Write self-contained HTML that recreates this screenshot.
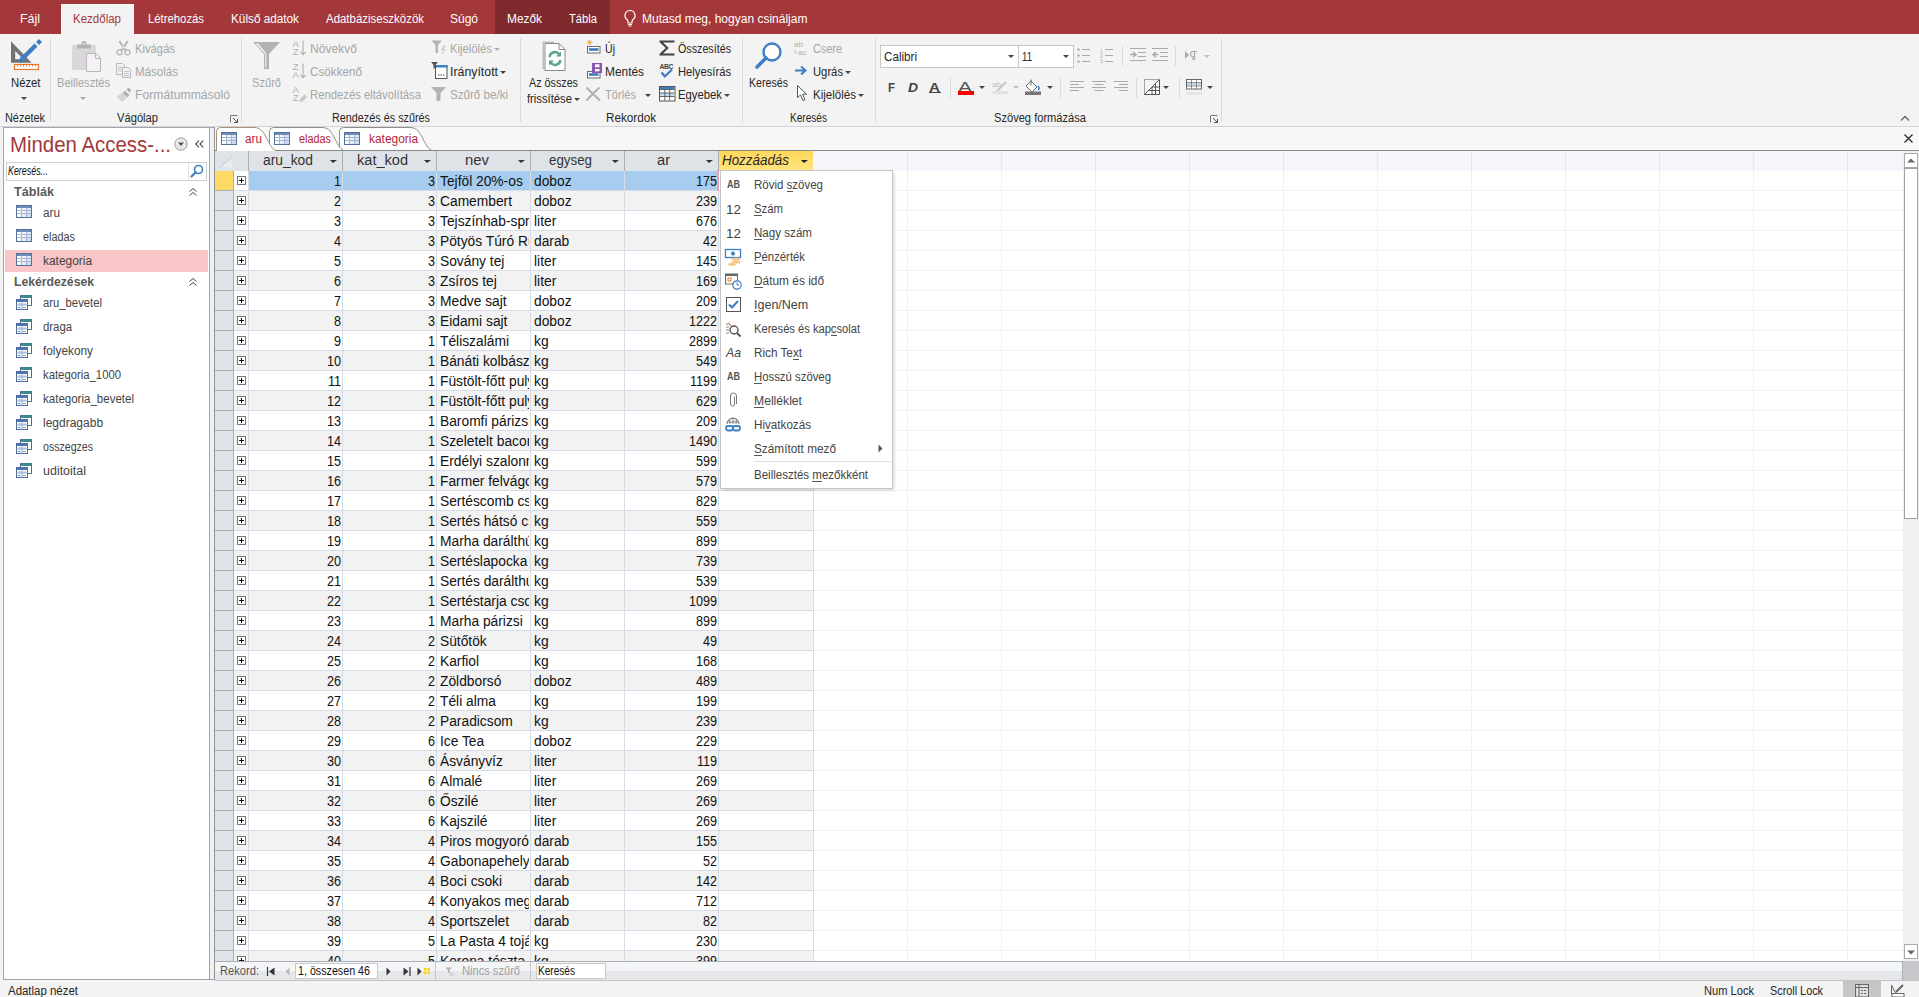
<!DOCTYPE html><html><head><meta charset="utf-8"><style>
html,body{margin:0;padding:0;}
body{width:1919px;height:997px;position:relative;overflow:hidden;background:#f3f3f3;font-family:"Liberation Sans",sans-serif;}
.t{position:absolute;white-space:pre;line-height:1;transform-origin:0 0;}
.r{position:absolute;}
.s{position:absolute;overflow:visible;}
</style></head><body>
<div class="r" style="left:0px;top:0px;width:1919px;height:34px;background:#a4373a;"></div>
<div class="r" style="left:495px;top:0px;width:115px;height:34px;background:#7f2a2d;"></div>
<div class="r" style="left:61px;top:4px;width:73px;height:31px;background:#f3f3f3;box-shadow:inset 1px 1px 0 #fafafa, inset -1px 0 0 #fafafa;"></div>
<div class="t" style="left:20.00px;top:12.84px;font-size:12px;color:#ffffff;transform:scaleX(1.0344);">Fájl</div>
<div class="t" style="left:73.00px;top:12.84px;font-size:12px;color:#a4373a;transform:scaleX(0.9593);">Kezdőlap</div>
<div class="t" style="left:148.00px;top:12.84px;font-size:12px;color:#ffffff;transform:scaleX(0.9432);">Létrehozás</div>
<div class="t" style="left:231.00px;top:12.84px;font-size:12px;color:#ffffff;transform:scaleX(0.9801);">Külső adatok</div>
<div class="t" style="left:326.00px;top:12.84px;font-size:12px;color:#ffffff;transform:scaleX(0.9541);">Adatbáziseszközök</div>
<div class="t" style="left:450.00px;top:12.84px;font-size:12px;color:#ffffff;">Súgó</div>
<div class="t" style="left:507.00px;top:12.84px;font-size:12px;color:#ffffff;transform:scaleX(0.9903);">Mezők</div>
<div class="t" style="left:569.00px;top:12.84px;font-size:12px;color:#ffffff;transform:scaleX(0.9328);">Tábla</div>
<svg class="s" style="left:623px;top:9px;" width="14" height="18" viewBox="0 0 14 18"><path d="M7 1.5a5 5 0 0 0-3 9c.7.6 1 1.3 1 2.2V14h4v-1.3c0-.9.3-1.6 1-2.2a5 5 0 0 0-3-9z" fill="none" stroke="#fff" stroke-width="1.2"/><path d="M5 15.5h4M5.5 17h3" stroke="#fff" stroke-width="1.1"/></svg>
<div class="t" style="left:642.00px;top:12.84px;font-size:12px;color:#ffffff;">Mutasd meg, hogyan csináljam</div>
<div class="r" style="left:0px;top:34px;width:1919px;height:92px;background:#f3f3f3;"></div>
<div class="r" style="left:0px;top:126px;width:1919px;height:1px;background:#d4d4d4;"></div>
<div class="r" style="left:50px;top:38px;width:1px;height:84px;background:#dadada;"></div>
<div class="r" style="left:241px;top:38px;width:1px;height:84px;background:#dadada;"></div>
<div class="r" style="left:520px;top:38px;width:1px;height:84px;background:#dadada;"></div>
<div class="r" style="left:742px;top:38px;width:1px;height:84px;background:#dadada;"></div>
<div class="r" style="left:875px;top:38px;width:1px;height:84px;background:#dadada;"></div>
<div class="r" style="left:1221px;top:38px;width:1px;height:84px;background:#dadada;"></div>
<div class="t" style="left:5.00px;top:111.84px;font-size:12px;color:#262626;transform:scaleX(0.9087);">Nézetek</div>
<div class="t" style="left:117.00px;top:111.84px;font-size:12px;color:#262626;transform:scaleX(0.9310);">Vágólap</div>
<div class="t" style="left:332.00px;top:111.84px;font-size:12px;color:#262626;transform:scaleX(0.9014);">Rendezés és szűrés</div>
<div class="t" style="left:606.00px;top:111.84px;font-size:12px;color:#262626;transform:scaleX(0.9736);">Rekordok</div>
<div class="t" style="left:790.00px;top:111.84px;font-size:12px;color:#262626;transform:scaleX(0.8405);">Keresés</div>
<div class="t" style="left:994.00px;top:111.84px;font-size:12px;color:#262626;transform:scaleX(0.9257);">Szöveg formázása</div>
<svg class="s" style="left:230px;top:115px;" width="8" height="8" viewBox="0 0 8 8"><path d="M0.5 7.5V0.5H7.5" fill="none" stroke="#777" stroke-width="1"/><path d="M3 3L7.5 7.5M4 7.5H7.5V4" fill="none" stroke="#555" stroke-width="1"/></svg>
<svg class="s" style="left:1210px;top:115px;" width="8" height="8" viewBox="0 0 8 8"><path d="M0.5 7.5V0.5H7.5" fill="none" stroke="#777" stroke-width="1"/><path d="M3 3L7.5 7.5M4 7.5H7.5V4" fill="none" stroke="#555" stroke-width="1"/></svg>
<svg class="s" style="left:1900px;top:115px;" width="10" height="6" viewBox="0 0 10 6"><path d="M1 5.5L5 1.5L9 5.5" fill="none" stroke="#666" stroke-width="1.4"/></svg>
<svg class="s" style="left:0px;top:36px;" width="48" height="36" viewBox="0 0 48 36"><path d="M11 5.3V26.7H31.6Z M15.2 15V23.2H23.4Z" fill="#737373" fill-rule="evenodd"/><rect x="14.5" y="28.5" width="24" height="5" fill="#fff" stroke="#e8772e" stroke-width="1.2"/><path d="M17.5 28.5v2M20.5 28.5v2M23.5 28.5v2M26.5 28.5v2M29.5 28.5v2M32.5 28.5v2M35.5 28.5v2" stroke="#e8772e" stroke-width="1"/><path d="M22.5 22.5L36 9" stroke="#3e7cc4" stroke-width="4.2"/><path d="M37.6 7.4L40.5 4.5" stroke="#3e7cc4" stroke-width="4.2"/><path d="M19 26.8L20.3 20.6L24.9 25.2Z" fill="#3e7cc4"/></svg>
<div class="t" style="left:10.50px;top:76.84px;font-size:12px;color:#262626;transform:scaleX(0.9411);">Nézet</div>
<svg class="s" style="left:21px;top:97px;" width="6" height="3" viewBox="0 0 6 3"><path d="M0 0H6 L3 3 Z" fill="#444"/></svg>
<svg class="s" style="left:70px;top:40px;" width="32" height="34" viewBox="0 0 32 34"><rect x="2" y="5" width="24" height="25" rx="1.5" fill="#d9d7da"/><path d="M7 4.5h14v4h-14z" fill="#b3b3b3"/><circle cx="14" cy="3.5" r="2.5" fill="#b3b3b3"/><circle cx="14" cy="3.8" r="0.9" fill="#f3f3f3"/><path d="M16.5 13.5H26L30.5 18V31.5H16.5Z" fill="#f4f0f5" stroke="#b8b8b8" stroke-width="1"/><path d="M25.5 13.5V18.5H30.5" fill="none" stroke="#b8b8b8" stroke-width="1"/></svg>
<div class="t" style="left:57.00px;top:76.84px;font-size:12px;color:#a6a6a6;transform:scaleX(0.9240);">Beillesztés</div>
<svg class="s" style="left:80px;top:97px;" width="6" height="3" viewBox="0 0 6 3"><path d="M0 0H6 L3 3 Z" fill="#aaa"/></svg>
<svg class="s" style="left:116px;top:40px;" width="15" height="16" viewBox="0 0 15 16"><circle cx="3.5" cy="12.3" r="2.5" fill="none" stroke="#b3b3b3" stroke-width="1.3"/><circle cx="11.5" cy="12.3" r="2.5" fill="none" stroke="#b3b3b3" stroke-width="1.3"/><path d="M4.5 10L11 0.5L12.5 1.5L6.5 10.5ZM10.5 10L4 0.5L2.5 1.5L8.5 10.5Z" fill="#b3b3b3"/></svg>
<div class="t" style="left:135.00px;top:42.84px;font-size:12px;color:#a6a6a6;transform:scaleX(0.9370);">Kivágás</div>
<svg class="s" style="left:116px;top:63px;" width="15" height="15" viewBox="0 0 15 15"><path d="M0.5 0.5h6l2 2v9h-8z" fill="#f3f3f3" stroke="#b8b8b8"/><path d="M6.5 4.5h6l2 2v8h-8z" fill="#f3f3f3" stroke="#b8b8b8"/><path d="M2 4h4M2 6h4M2 8h4M8 8.5h5M8 10.5h5M8 12.5h5" stroke="#b8b8b8" stroke-width="0.8"/></svg>
<div class="t" style="left:135.00px;top:65.84px;font-size:12px;color:#a6a6a6;transform:scaleX(0.9623);">Másolás</div>
<svg class="s" style="left:116px;top:86px;" width="17" height="17" viewBox="0 0 17 17"><path d="M12.5 1.5L15.5 4.5L13.5 6.5L10.5 3.5Z" fill="#b0b0b0"/><path d="M9 4.5L13.5 9L11 11.5L6.5 7Z" fill="#b3b3b3"/><path d="M6.5 7L11 11.5L6.5 16L0.5 10.5Z" fill="#d6d4d7"/></svg>
<div class="t" style="left:135.00px;top:88.84px;font-size:12px;color:#a6a6a6;transform:scaleX(1.0176);">Formátummásoló</div>
<svg class="s" style="left:252px;top:41px;" width="29" height="29" viewBox="0 0 29 29"><path d="M1 1H28L17 13V28H12V13Z" fill="#b3b1b4"/><path d="M3.5 2.5H6L14.3 12.2V26.5H13.2V12.7Z" fill="#f3f3f3"/></svg>
<div class="t" style="left:252.00px;top:76.84px;font-size:12px;color:#a6a6a6;transform:scaleX(0.9251);">Szűrő</div>
<svg class="s" style="left:292px;top:40px;" width="15" height="16" viewBox="0 0 15 16"><text x="0.5" y="7" font-size="9.5" font-family="Liberation Sans" fill="#b0b0b0">A</text><text x="0.8" y="15" font-size="9.5" font-family="Liberation Sans" fill="#b0b0b0">Z</text><path d="M11 0.5V14.5M8.3 11.8l2.7 2.9 2.7-2.9" fill="none" stroke="#b0b0b0" stroke-width="1.1"/></svg>
<div class="t" style="left:310.00px;top:42.84px;font-size:12px;color:#a6a6a6;transform:scaleX(1.0067);">Növekvő</div>
<svg class="s" style="left:292px;top:63px;" width="15" height="16" viewBox="0 0 15 16"><text x="0.8" y="7" font-size="9.5" font-family="Liberation Sans" fill="#b0b0b0">Z</text><text x="0.5" y="15" font-size="9.5" font-family="Liberation Sans" fill="#b0b0b0">A</text><path d="M11 0.5V14.5M8.3 11.8l2.7 2.9 2.7-2.9" fill="none" stroke="#b0b0b0" stroke-width="1.1"/></svg>
<div class="t" style="left:310.00px;top:65.84px;font-size:12px;color:#a6a6a6;transform:scaleX(0.9745);">Csökkenő</div>
<svg class="s" style="left:292px;top:86px;" width="16" height="17" viewBox="0 0 16 17"><text x="0.5" y="7" font-size="9.5" font-family="Liberation Sans" fill="#b0b0b0">A</text><text x="0.8" y="15" font-size="9.5" font-family="Liberation Sans" fill="#b0b0b0">Z</text><path d="M7.5 13.5l5-5 2.5 2.5-5 5z" fill="#c9c7ca"/><path d="M6 15l1.5-1.5 2.5 2.5-1.5 1z" fill="#dcdcdc"/></svg>
<div class="t" style="left:310.00px;top:88.84px;font-size:12px;color:#a6a6a6;transform:scaleX(0.9401);">Rendezés eltávolítása</div>
<svg class="s" style="left:431px;top:40px;" width="16" height="16" viewBox="0 0 16 16"><path d="M0.5 0.5H11L7 5V13H4.5V5Z" fill="#b3b3b3"/><path d="M13 5l-3 5h2.5l-2 5 4.5-6H12.5l2-4z" fill="#c9c9c9"/></svg>
<div class="t" style="left:450.00px;top:42.84px;font-size:12px;color:#a6a6a6;transform:scaleX(0.9399);">Kijelölés</div>
<svg class="s" style="left:494px;top:48px;" width="6" height="3" viewBox="0 0 6 3"><path d="M0 0H6 L3 3 Z" fill="#b0b0b0"/></svg>
<svg class="s" style="left:431px;top:62px;" width="17" height="18" viewBox="0 0 17 18"><path d="M0 0H7L4.5 3V6.5H2.5V3Z" fill="#555"/><rect x="4.5" y="3.5" width="11.5" height="13" fill="#fff" stroke="#555" stroke-width="1"/><rect x="5" y="3" width="11.5" height="2.5" fill="#3f7fc3"/><path d="M7 13h1.5M9.5 13h1.5M12 13h1.5" stroke="#444" stroke-width="1.2"/></svg>
<div class="t" style="left:450.00px;top:65.84px;font-size:12px;color:#262626;transform:scaleX(1.0281);">Irányított</div>
<svg class="s" style="left:500px;top:71px;" width="6" height="3" viewBox="0 0 6 3"><path d="M0 0H6 L3 3 Z" fill="#444"/></svg>
<svg class="s" style="left:431px;top:87px;" width="16" height="14" viewBox="0 0 16 14"><path d="M0 0H15L9.5 6V14H5.5V6Z" fill="#b3b3b3"/></svg>
<div class="t" style="left:450.00px;top:88.84px;font-size:12px;color:#a6a6a6;transform:scaleX(0.9662);">Szűrő be/ki</div>
<svg class="s" style="left:541px;top:40px;" width="26" height="32" viewBox="0 0 26 32"><path d="M1.5 1.5H13V3H3V29H1.5Z" fill="#bdbdbd"/><path d="M4 3.5H18L24 9.5V30.5H4Z" fill="#fff" stroke="#8a8a8a" stroke-width="1"/><path d="M18 3.5V9.5H24" fill="none" stroke="#8a8a8a" stroke-width="1"/><path d="M8.5 17a5.5 5.5 0 0 1 10-2.5" fill="none" stroke="#5ba58d" stroke-width="2.4"/><path d="M20 11.5v5h-5z" fill="#5ba58d"/><path d="M19.5 20a5.5 5.5 0 0 1-10 2.5" fill="none" stroke="#5ba58d" stroke-width="2.4"/><path d="M8 25.5v-5h5z" fill="#5ba58d"/></svg>
<div class="t" style="left:529.00px;top:76.84px;font-size:12px;color:#262626;transform:scaleX(0.8960);">Az összes</div>
<div class="t" style="left:527.00px;top:92.84px;font-size:12px;color:#262626;transform:scaleX(0.9373);">frissítése</div>
<svg class="s" style="left:574px;top:98px;" width="6" height="3" viewBox="0 0 6 3"><path d="M0 0H6 L3 3 Z" fill="#444"/></svg>
<svg class="s" style="left:585px;top:39px;" width="17" height="16" viewBox="0 0 17 16"><path d="M4.5 0.5v6M1.5 3.5h6M2.3 1.3l4.4 4.4M6.7 1.3L2.3 5.7" stroke="#f0b050" stroke-width="0.9"/><rect x="2.5" y="7.5" width="12.5" height="6.5" fill="#fff" stroke="#6a6a6a" stroke-width="1"/><rect x="4" y="9.2" width="9.5" height="2.6" fill="#3f7bc0"/></svg>
<div class="t" style="left:605.00px;top:42.84px;font-size:12px;color:#262626;transform:scaleX(0.8825);">Új</div>
<svg class="s" style="left:585px;top:62px;" width="19" height="17" viewBox="0 0 19 17"><rect x="2.5" y="9.5" width="12.5" height="6.5" fill="#fff" stroke="#6a6a6a" stroke-width="1"/><rect x="4" y="11.2" width="9.5" height="2.6" fill="#3f7bc0"/><rect x="7" y="1" width="10" height="10" fill="#8b55b0"/><rect x="10" y="2.3" width="4.5" height="3" fill="#fff"/><rect x="10" y="7" width="4.5" height="2.3" fill="#fff"/></svg>
<div class="t" style="left:605.00px;top:65.84px;font-size:12px;color:#262626;transform:scaleX(0.9911);">Mentés</div>
<svg class="s" style="left:585px;top:86px;" width="17" height="16" viewBox="0 0 17 16"><path d="M1.5 1.5C6 6 10 10 15 14.5M14.5 1.5C10 5.5 6 9.5 1.5 14.5" fill="none" stroke="#b3b3b3" stroke-width="2.2"/></svg>
<div class="t" style="left:605.00px;top:88.84px;font-size:12px;color:#a6a6a6;transform:scaleX(0.9298);">Törlés</div>
<svg class="s" style="left:645px;top:94px;" width="6" height="3" viewBox="0 0 6 3"><path d="M0 0H6 L3 3 Z" fill="#444"/></svg>
<svg class="s" style="left:658px;top:39px;" width="18" height="18" viewBox="0 0 18 18"><path d="M1.5 2.5H16.5M2.5 2.5L9.2 9L2.5 15.5M1.5 15.5H16.5" fill="none" stroke="#444" stroke-width="2.1" stroke-linejoin="miter"/></svg>
<div class="t" style="left:678.00px;top:42.84px;font-size:12px;color:#262626;transform:scaleX(0.8930);">Összesítés</div>
<svg class="s" style="left:659px;top:62px;" width="16" height="17" viewBox="0 0 16 17"><text x="0.5" y="6.5" font-size="6.8" font-weight="bold" font-family="Liberation Sans" fill="#444" textLength="14">ABC</text><path d="M2.5 10.5l3.3 4L13 7.5" fill="none" stroke="#3f7bc0" stroke-width="2.2"/></svg>
<div class="t" style="left:678.00px;top:65.84px;font-size:12px;color:#262626;transform:scaleX(0.9350);">Helyesírás</div>
<svg class="s" style="left:659px;top:86px;" width="17" height="16" viewBox="0 0 17 16"><rect x="0.5" y="0.5" width="15.5" height="14.5" fill="#fff" stroke="#555" stroke-width="1"/><rect x="1" y="1" width="14.5" height="2.3" fill="#3f7bc0"/><rect x="1" y="7" width="14.5" height="3.2" fill="#c7dcf0"/><path d="M1 3.5h14.5M1 7h14.5M1 10.5h14.5M5.8 3.5v11M10.7 3.5v11" stroke="#555" stroke-width="0.9"/></svg>
<div class="t" style="left:678.00px;top:88.84px;font-size:12px;color:#262626;transform:scaleX(0.9422);">Egyebek</div>
<svg class="s" style="left:724px;top:94px;" width="6" height="3" viewBox="0 0 6 3"><path d="M0 0H6 L3 3 Z" fill="#444"/></svg>
<svg class="s" style="left:754px;top:41px;" width="30" height="30" viewBox="0 0 30 30"><circle cx="18" cy="11" r="8.5" fill="#fff" stroke="#3f7fc3" stroke-width="2.4"/><path d="M12 17L3 26" stroke="#3f7fc3" stroke-width="3.6" stroke-linecap="round"/></svg>
<div class="t" style="left:749.00px;top:76.84px;font-size:12px;color:#262626;transform:scaleX(0.8859);">Keresés</div>
<svg class="s" style="left:794px;top:41px;" width="17" height="14" viewBox="0 0 17 14"><text x="0" y="6" font-size="8" font-family="Liberation Sans" fill="#b0b0b0">ab</text><text x="4" y="13.5" font-size="8" font-family="Liberation Sans" fill="#b0b0b0">ac</text><path d="M1 9.5V12H3" fill="none" stroke="#b0b0b0" stroke-width="0.8"/></svg>
<div class="t" style="left:813.00px;top:42.84px;font-size:12px;color:#a6a6a6;transform:scaleX(0.9060);">Csere</div>
<svg class="s" style="left:795px;top:66px;" width="13" height="9" viewBox="0 0 13 9"><path d="M0 4.5H10M6 0.5L10.5 4.5L6 8.5" fill="none" stroke="#3f7fc3" stroke-width="2"/></svg>
<div class="t" style="left:813.00px;top:65.84px;font-size:12px;color:#262626;transform:scaleX(0.9372);">Ugrás</div>
<svg class="s" style="left:845px;top:71px;" width="6" height="3" viewBox="0 0 6 3"><path d="M0 0H6 L3 3 Z" fill="#444"/></svg>
<svg class="s" style="left:797px;top:85px;" width="11" height="16" viewBox="0 0 11 16"><path d="M0.5 0.5V12.5L3.5 10L6 15.5L8 14.5L5.5 9.2H9.5Z" fill="#fff" stroke="#555" stroke-width="1"/></svg>
<div class="t" style="left:813.00px;top:88.84px;font-size:12px;color:#262626;transform:scaleX(0.9622);">Kijelölés</div>
<svg class="s" style="left:858px;top:94px;" width="6" height="3" viewBox="0 0 6 3"><path d="M0 0H6 L3 3 Z" fill="#444"/></svg>
<div class="r" style="left:880px;top:45px;width:139px;height:23px;background:#fff;box-shadow:inset 0 0 0 1px #c6c6c6;"></div>
<div class="r" style="left:1018px;top:45px;width:56px;height:23px;background:#fff;box-shadow:inset 0 0 0 1px #c6c6c6;"></div>
<div class="t" style="left:884.00px;top:50.84px;font-size:12px;color:#262626;transform:scaleX(0.9704);">Calibri</div>
<svg class="s" style="left:1008px;top:55px;" width="6" height="3" viewBox="0 0 6 3"><path d="M0 0H6 L3 3 Z" fill="#444"/></svg>
<div class="t" style="left:1022.00px;top:50.84px;font-size:12px;color:#262626;transform:scaleX(0.8028);">11</div>
<svg class="s" style="left:1063px;top:55px;" width="6" height="3" viewBox="0 0 6 3"><path d="M0 0H6 L3 3 Z" fill="#444"/></svg>
<svg class="s" style="left:1077px;top:48px;" width="14" height="14" viewBox="0 0 14 14"><circle cx="1.5" cy="1.5" r="1.2" fill="#aaa"/><circle cx="1.5" cy="7.5" r="1.2" fill="#aaa"/><circle cx="1.5" cy="13.5" r="1.2" fill="#aaa"/><path d="M5 1.5h8M5 7.5h8M5 13.5h8" stroke="#aaa" stroke-width="1"/></svg>
<svg class="s" style="left:1100px;top:48px;" width="15" height="15" viewBox="0 0 15 15"><text x="0" y="5" font-size="5" font-family="Liberation Sans" fill="#aaa">1</text><text x="0" y="10" font-size="5" font-family="Liberation Sans" fill="#aaa">2</text><text x="0" y="15" font-size="5" font-family="Liberation Sans" fill="#aaa">3</text><path d="M5 1.5h8M5 7.5h8M5 13.5h8" stroke="#aaa" stroke-width="1"/></svg>
<div class="r" style="left:1122px;top:46px;width:1px;height:20px;background:#dadada;"></div>
<svg class="s" style="left:1130px;top:48px;" width="16" height="14" viewBox="0 0 16 14"><path d="M0 0.5h16M8 4.5h8M8 8.5h8M0 12.5h16" stroke="#aaa" stroke-width="1"/><path d="M0 6.5h5M3 4l3 2.5-3 2.5" fill="none" stroke="#aaa" stroke-width="1.5"/></svg>
<svg class="s" style="left:1152px;top:48px;" width="16" height="14" viewBox="0 0 16 14"><path d="M0 0.5h16M8 4.5h8M8 8.5h8M0 12.5h16" stroke="#aaa" stroke-width="1"/><path d="M1.5 6.5h5M4 4L1 6.5 4 9" fill="none" stroke="#aaa" stroke-width="1.5"/></svg>
<div class="r" style="left:1175px;top:46px;width:1px;height:20px;background:#dadada;"></div>
<svg class="s" style="left:1185px;top:51px;" width="13" height="9" viewBox="0 0 13 9"><path d="M0 0L4 4L0 8Z" fill="#aaa"/><path d="M8 0.5a2.5 2.5 0 0 0 0 5V9M9.5 0.5V9M8 0.5h4" fill="none" stroke="#aaa" stroke-width="1.2"/></svg>
<svg class="s" style="left:1204px;top:55px;" width="6" height="3" viewBox="0 0 6 3"><path d="M0 0H6 L3 3 Z" fill="#bbb"/></svg>
<div class="t" style="left:888.00px;top:81.84px;font-size:12px;color:#444;font-weight:bold;transform:scaleX(0.9550);">F</div>
<div class="t" style="left:908.00px;top:81.84px;font-size:12px;color:#444;font-weight:bold;font-style:italic;transform:scaleX(1.1540);">D</div>
<div class="t" style="left:929.00px;top:81.84px;font-size:12px;color:#444;font-weight:bold;transform:scaleX(1.2694);">A</div>
<div class="r" style="left:929px;top:92px;width:12px;height:1px;background:#444;"></div>
<div class="r" style="left:950px;top:78px;width:1px;height:20px;background:#dadada;"></div>
<div class="t" style="left:958.00px;top:80.15px;font-size:14px;color:#555;transform:scaleX(1.4993);">A</div>
<div class="r" style="left:958px;top:91px;width:16px;height:4px;background:#ff0000;"></div>
<svg class="s" style="left:979px;top:86px;" width="6" height="3" viewBox="0 0 6 3"><path d="M0 0H6 L3 3 Z" fill="#444"/></svg>
<svg class="s" style="left:992px;top:79px;" width="16" height="16" viewBox="0 0 16 16"><text x="0" y="8" font-size="8" font-family="Liberation Sans" fill="#c0c0c0">ab</text><path d="M5 12L14 3" stroke="#c6c6c6" stroke-width="2"/><rect x="0" y="12" width="16" height="3.5" fill="#e4e1e6"/></svg>
<svg class="s" style="left:1013px;top:86px;" width="6" height="3" viewBox="0 0 6 3"><path d="M0 0H6 L3 3 Z" fill="#bbb"/></svg>
<svg class="s" style="left:1025px;top:79px;" width="18" height="16" viewBox="0 0 18 16"><path d="M6 2l6 6-5 5-6-6z" fill="#fff" stroke="#666" stroke-width="1"/><path d="M6 0.5v6" stroke="#666" stroke-width="1"/><path d="M13 7c1 1 1.5 2.5 0.5 4" stroke="#3f7fc3" stroke-width="1.5" fill="none"/><rect x="0" y="12.5" width="16" height="3.5" fill="#767676"/></svg>
<svg class="s" style="left:1047px;top:86px;" width="6" height="3" viewBox="0 0 6 3"><path d="M0 0H6 L3 3 Z" fill="#444"/></svg>
<div class="r" style="left:1060px;top:78px;width:1px;height:20px;background:#dadada;"></div>
<svg class="s" style="left:1070px;top:81px;" width="14" height="10" viewBox="0 0 14 10"><path d="M0 0.5h14M0 3.5h9M0 6.5h14M0 9.5h9" stroke="#aaa" stroke-width="1"/></svg>
<svg class="s" style="left:1092px;top:81px;" width="14" height="10" viewBox="0 0 14 10"><path d="M0 0.5h14M2.5 3.5h9M0 6.5h14M2.5 9.5h9" stroke="#aaa" stroke-width="1"/></svg>
<svg class="s" style="left:1114px;top:81px;" width="14" height="10" viewBox="0 0 14 10"><path d="M0 0.5h14M5 3.5h9M0 6.5h14M5 9.5h9" stroke="#aaa" stroke-width="1"/></svg>
<div class="r" style="left:1136px;top:78px;width:1px;height:20px;background:#dadada;"></div>
<svg class="s" style="left:1144px;top:79px;" width="16" height="16" viewBox="0 0 16 16"><path d="M0.5 15.5V0.5H15.5" fill="none" stroke="#555" stroke-width="1" stroke-dasharray="1 1"/><path d="M0.5 15.5L15.5 0.5V15.5Z" fill="#fff" stroke="#555" stroke-width="1"/><path d="M8 8v7.5M11.5 4.5v11M4.5 11.5h11M8 8h7.5" stroke="#555" stroke-width="1"/></svg>
<svg class="s" style="left:1163px;top:86px;" width="6" height="3" viewBox="0 0 6 3"><path d="M0 0H6 L3 3 Z" fill="#444"/></svg>
<div class="r" style="left:1179px;top:78px;width:1px;height:20px;background:#dadada;"></div>
<svg class="s" style="left:1186px;top:79px;" width="16" height="11" viewBox="0 0 16 11"><rect x="0.5" y="0.5" width="15" height="9.5" fill="#fff" stroke="#666"/><rect x="1" y="4" width="14" height="2.5" fill="#bfd7ef"/><path d="M0.5 3.5h15M0.5 7h15M5.5 0.5v9.5M10.5 0.5v9.5" stroke="#777" stroke-width="0.8"/></svg>
<div class="r" style="left:1186px;top:92px;width:16px;height:3px;background:#e6e6e6;"></div>
<svg class="s" style="left:1207px;top:86px;" width="6" height="3" viewBox="0 0 6 3"><path d="M0 0H6 L3 3 Z" fill="#444"/></svg>
<div class="r" style="left:0px;top:127px;width:1919px;height:870px;background:#f3f3f3;"></div>
<div class="r" style="left:3px;top:127px;width:207px;height:853px;background:#ffffff;box-shadow:inset 1px 0 0 #9da5b0, inset 0 -1px 0 #9da5b0, inset 0 1px 0 #a0a7b0, inset -1px 0 0 #9da5b0;"></div>
<div class="t" style="left:10.00px;top:134.38px;font-size:22px;color:#a4373a;transform:scaleX(0.9273);">Minden Access-...</div>
<svg class="s" style="left:174px;top:137px;" width="14" height="14" viewBox="0 0 14 14"><circle cx="7" cy="7" r="6.2" fill="#e9e9e9" stroke="#9a9a9a" stroke-width="1"/><path d="M4 5.5h6L7 9z" fill="#555"/></svg>
<svg class="s" style="left:195px;top:140px;" width="9" height="8" viewBox="0 0 9 8"><path d="M4 0.5L0.8 4L4 7.5M8.2 0.5L5 4L8.2 7.5" fill="none" stroke="#333" stroke-width="1.1"/></svg>
<div class="r" style="left:6px;top:162px;width:201px;height:19px;background:#fff;box-shadow:inset 0 0 0 1px #cfcfcf;"></div>
<div class="r" style="left:188px;top:163px;width:1px;height:17px;background:#e0e0e0;"></div>
<div class="t" style="left:8.00px;top:164.84px;font-size:12px;color:#111;font-style:italic;transform:scaleX(0.7404);">Keresés...</div>
<svg class="s" style="left:190px;top:164px;" width="14" height="14" viewBox="0 0 14 14"><circle cx="8.5" cy="5.5" r="4" fill="none" stroke="#3f7fc3" stroke-width="1.6"/><path d="M5.8 8.2L1.5 12.5" stroke="#3f7fc3" stroke-width="2.2" stroke-linecap="round"/></svg>
<div class="t" style="left:14.00px;top:185.84px;font-size:12px;color:#5a5a5a;font-weight:bold;transform:scaleX(1.0522);">Táblák</div>
<svg class="s" style="left:189px;top:188px;" width="8" height="8" viewBox="0 0 8 8"><path d="M0.5 3.5L4 0.5L7.5 3.5M0.5 7.5L4 4.5L7.5 7.5" fill="none" stroke="#444" stroke-width="1"/></svg>
<div class="r" style="left:5px;top:250px;width:203px;height:22px;background:#f9c5c7;"></div>
<svg class="s" style="left:16px;top:205px;" width="16" height="13" viewBox="0 0 16 13"><rect x="0.5" y="0.5" width="15" height="12" fill="#a3b6d4" stroke="#53709f" stroke-width="1"/><rect x="1" y="1" width="14" height="2" fill="#6f8bb8"/><rect x="1" y="3" width="4" height="2" fill="#ffffff"/><rect x="6" y="3" width="4" height="2" fill="#f3f6fb"/><rect x="11" y="3" width="4" height="2" fill="#dfe8f6"/><rect x="1" y="6" width="4" height="2" fill="#ffffff"/><rect x="6" y="6" width="4" height="2" fill="#edf2fa"/><rect x="11" y="6" width="4" height="2" fill="#d6e3f5"/><rect x="1" y="9" width="4" height="3" fill="#fafcfe"/><rect x="6" y="9" width="4" height="3" fill="#e5edf9"/><rect x="11" y="9" width="4" height="3" fill="#cddcf3"/></svg>
<div class="t" style="left:43.00px;top:206.84px;font-size:12px;color:#444444;transform:scaleX(0.9802);">aru</div>
<svg class="s" style="left:16px;top:229px;" width="16" height="13" viewBox="0 0 16 13"><rect x="0.5" y="0.5" width="15" height="12" fill="#a3b6d4" stroke="#53709f" stroke-width="1"/><rect x="1" y="1" width="14" height="2" fill="#6f8bb8"/><rect x="1" y="3" width="4" height="2" fill="#ffffff"/><rect x="6" y="3" width="4" height="2" fill="#f3f6fb"/><rect x="11" y="3" width="4" height="2" fill="#dfe8f6"/><rect x="1" y="6" width="4" height="2" fill="#ffffff"/><rect x="6" y="6" width="4" height="2" fill="#edf2fa"/><rect x="11" y="6" width="4" height="2" fill="#d6e3f5"/><rect x="1" y="9" width="4" height="3" fill="#fafcfe"/><rect x="6" y="9" width="4" height="3" fill="#e5edf9"/><rect x="11" y="9" width="4" height="3" fill="#cddcf3"/></svg>
<div class="t" style="left:43.00px;top:230.84px;font-size:12px;color:#444444;transform:scaleX(0.9050);">eladas</div>
<svg class="s" style="left:16px;top:253px;" width="16" height="13" viewBox="0 0 16 13"><rect x="0.5" y="0.5" width="15" height="12" fill="#a3b6d4" stroke="#53709f" stroke-width="1"/><rect x="1" y="1" width="14" height="2" fill="#6f8bb8"/><rect x="1" y="3" width="4" height="2" fill="#ffffff"/><rect x="6" y="3" width="4" height="2" fill="#f3f6fb"/><rect x="11" y="3" width="4" height="2" fill="#dfe8f6"/><rect x="1" y="6" width="4" height="2" fill="#ffffff"/><rect x="6" y="6" width="4" height="2" fill="#edf2fa"/><rect x="11" y="6" width="4" height="2" fill="#d6e3f5"/><rect x="1" y="9" width="4" height="3" fill="#fafcfe"/><rect x="6" y="9" width="4" height="3" fill="#e5edf9"/><rect x="11" y="9" width="4" height="3" fill="#cddcf3"/></svg>
<div class="t" style="left:43.00px;top:254.84px;font-size:12px;color:#444444;transform:scaleX(0.9926);">kategoria</div>
<div class="t" style="left:14.00px;top:275.84px;font-size:12px;color:#5a5a5a;font-weight:bold;transform:scaleX(1.0163);">Lekérdezések</div>
<svg class="s" style="left:189px;top:278px;" width="8" height="8" viewBox="0 0 8 8"><path d="M0.5 3.5L4 0.5L7.5 3.5M0.5 7.5L4 4.5L7.5 7.5" fill="none" stroke="#444" stroke-width="1"/></svg>
<svg class="s" style="left:16px;top:295px;" width="16" height="15" viewBox="0 0 16 15"><rect x="4.5" y="0.5" width="11" height="10" fill="#fff" stroke="#3f7a82" stroke-width="1"/><rect x="4.5" y="0.5" width="11" height="2.5" fill="#3f8a8f"/><rect x="0.5" y="4.5" width="11" height="10" fill="#fff" stroke="#466d9e" stroke-width="1"/><rect x="0.5" y="4.5" width="11" height="2.5" fill="#4f73a8"/><path d="M0.5 10h11M6 7v7.5" stroke="#8aa3c8" stroke-width="0.9"/><path d="M2 9h3M7 9h3M2 12.5h3M7 12.5h3" stroke="#9ab" stroke-width="1"/></svg>
<div class="t" style="left:43.00px;top:296.84px;font-size:12px;color:#444444;transform:scaleX(0.9408);">aru_bevetel</div>
<svg class="s" style="left:16px;top:319px;" width="16" height="15" viewBox="0 0 16 15"><rect x="4.5" y="0.5" width="11" height="10" fill="#fff" stroke="#3f7a82" stroke-width="1"/><rect x="4.5" y="0.5" width="11" height="2.5" fill="#3f8a8f"/><rect x="0.5" y="4.5" width="11" height="10" fill="#fff" stroke="#466d9e" stroke-width="1"/><rect x="0.5" y="4.5" width="11" height="2.5" fill="#4f73a8"/><path d="M0.5 10h11M6 7v7.5" stroke="#8aa3c8" stroke-width="0.9"/><path d="M2 9h3M7 9h3M2 12.5h3M7 12.5h3" stroke="#9ab" stroke-width="1"/></svg>
<div class="t" style="left:43.00px;top:320.84px;font-size:12px;color:#444444;transform:scaleX(0.9449);">draga</div>
<svg class="s" style="left:16px;top:343px;" width="16" height="15" viewBox="0 0 16 15"><rect x="4.5" y="0.5" width="11" height="10" fill="#fff" stroke="#3f7a82" stroke-width="1"/><rect x="4.5" y="0.5" width="11" height="2.5" fill="#3f8a8f"/><rect x="0.5" y="4.5" width="11" height="10" fill="#fff" stroke="#466d9e" stroke-width="1"/><rect x="0.5" y="4.5" width="11" height="2.5" fill="#4f73a8"/><path d="M0.5 10h11M6 7v7.5" stroke="#8aa3c8" stroke-width="0.9"/><path d="M2 9h3M7 9h3M2 12.5h3M7 12.5h3" stroke="#9ab" stroke-width="1"/></svg>
<div class="t" style="left:43.00px;top:344.84px;font-size:12px;color:#444444;transform:scaleX(0.9863);">folyekony</div>
<svg class="s" style="left:16px;top:367px;" width="16" height="15" viewBox="0 0 16 15"><rect x="4.5" y="0.5" width="11" height="10" fill="#fff" stroke="#3f7a82" stroke-width="1"/><rect x="4.5" y="0.5" width="11" height="2.5" fill="#3f8a8f"/><rect x="0.5" y="4.5" width="11" height="10" fill="#fff" stroke="#466d9e" stroke-width="1"/><rect x="0.5" y="4.5" width="11" height="2.5" fill="#4f73a8"/><path d="M0.5 10h11M6 7v7.5" stroke="#8aa3c8" stroke-width="0.9"/><path d="M2 9h3M7 9h3M2 12.5h3M7 12.5h3" stroke="#9ab" stroke-width="1"/></svg>
<div class="t" style="left:43.00px;top:368.84px;font-size:12px;color:#444444;transform:scaleX(0.9428);">kategoria_1000</div>
<svg class="s" style="left:16px;top:391px;" width="16" height="15" viewBox="0 0 16 15"><rect x="4.5" y="0.5" width="11" height="10" fill="#fff" stroke="#3f7a82" stroke-width="1"/><rect x="4.5" y="0.5" width="11" height="2.5" fill="#3f8a8f"/><rect x="0.5" y="4.5" width="11" height="10" fill="#fff" stroke="#466d9e" stroke-width="1"/><rect x="0.5" y="4.5" width="11" height="2.5" fill="#4f73a8"/><path d="M0.5 10h11M6 7v7.5" stroke="#8aa3c8" stroke-width="0.9"/><path d="M2 9h3M7 9h3M2 12.5h3M7 12.5h3" stroke="#9ab" stroke-width="1"/></svg>
<div class="t" style="left:43.00px;top:392.84px;font-size:12px;color:#444444;transform:scaleX(0.9606);">kategoria_bevetel</div>
<svg class="s" style="left:16px;top:415px;" width="16" height="15" viewBox="0 0 16 15"><rect x="4.5" y="0.5" width="11" height="10" fill="#fff" stroke="#3f7a82" stroke-width="1"/><rect x="4.5" y="0.5" width="11" height="2.5" fill="#3f8a8f"/><rect x="0.5" y="4.5" width="11" height="10" fill="#fff" stroke="#466d9e" stroke-width="1"/><rect x="0.5" y="4.5" width="11" height="2.5" fill="#4f73a8"/><path d="M0.5 10h11M6 7v7.5" stroke="#8aa3c8" stroke-width="0.9"/><path d="M2 9h3M7 9h3M2 12.5h3M7 12.5h3" stroke="#9ab" stroke-width="1"/></svg>
<div class="t" style="left:43.00px;top:416.84px;font-size:12px;color:#444444;">legdragabb</div>
<svg class="s" style="left:16px;top:439px;" width="16" height="15" viewBox="0 0 16 15"><rect x="4.5" y="0.5" width="11" height="10" fill="#fff" stroke="#3f7a82" stroke-width="1"/><rect x="4.5" y="0.5" width="11" height="2.5" fill="#3f8a8f"/><rect x="0.5" y="4.5" width="11" height="10" fill="#fff" stroke="#466d9e" stroke-width="1"/><rect x="0.5" y="4.5" width="11" height="2.5" fill="#4f73a8"/><path d="M0.5 10h11M6 7v7.5" stroke="#8aa3c8" stroke-width="0.9"/><path d="M2 9h3M7 9h3M2 12.5h3M7 12.5h3" stroke="#9ab" stroke-width="1"/></svg>
<div class="t" style="left:43.00px;top:440.84px;font-size:12px;color:#444444;transform:scaleX(0.8819);">osszegzes</div>
<svg class="s" style="left:16px;top:463px;" width="16" height="15" viewBox="0 0 16 15"><rect x="4.5" y="0.5" width="11" height="10" fill="#fff" stroke="#3f7a82" stroke-width="1"/><rect x="4.5" y="0.5" width="11" height="2.5" fill="#3f8a8f"/><rect x="0.5" y="4.5" width="11" height="10" fill="#fff" stroke="#466d9e" stroke-width="1"/><rect x="0.5" y="4.5" width="11" height="2.5" fill="#4f73a8"/><path d="M0.5 10h11M6 7v7.5" stroke="#8aa3c8" stroke-width="0.9"/><path d="M2 9h3M7 9h3M2 12.5h3M7 12.5h3" stroke="#9ab" stroke-width="1"/></svg>
<div class="t" style="left:43.00px;top:464.84px;font-size:12px;color:#444444;transform:scaleX(1.0397);">uditoital</div>
<div class="r" style="left:210px;top:127px;width:4px;height:853px;background:#f1f1f1;box-shadow:inset 0 1px 0 #a0a7b0, inset 0 -1px 0 #9da5b0;"></div>
<div class="r" style="left:214px;top:127px;width:1705px;height:853px;background:#f7f7f7;"></div>
<div class="r" style="left:214px;top:127px;width:1px;height:853px;background:#8e959e;"></div>
<svg class="s" style="left:339px;top:127px;" width="95" height="24" viewBox="0 0 95 24"><path d="M0.5 24 V4.5 Q0.5 0.5 4.5 0.5 H71.0 C78.0 0.5 81.0 6 84.0 12 C87.0 18 90.0 23.5 94.0 23.5" fill="#fff" stroke="#8c8c8c" stroke-width="1"/></svg>
<svg class="s" style="left:344px;top:132px;" width="16" height="13" viewBox="0 0 16 13"><rect x="0.5" y="0.5" width="15" height="12" fill="#a3b6d4" stroke="#53709f" stroke-width="1"/><rect x="1" y="1" width="14" height="2" fill="#6f8bb8"/><rect x="1" y="3" width="4" height="2" fill="#ffffff"/><rect x="6" y="3" width="4" height="2" fill="#f3f6fb"/><rect x="11" y="3" width="4" height="2" fill="#dfe8f6"/><rect x="1" y="6" width="4" height="2" fill="#ffffff"/><rect x="6" y="6" width="4" height="2" fill="#edf2fa"/><rect x="11" y="6" width="4" height="2" fill="#d6e3f5"/><rect x="1" y="9" width="4" height="3" fill="#fafcfe"/><rect x="6" y="9" width="4" height="3" fill="#e5edf9"/><rect x="11" y="9" width="4" height="3" fill="#cddcf3"/></svg>
<div class="t" style="left:369.00px;top:132.84px;font-size:12px;color:#b5263b;transform:scaleX(0.9926);">kategoria</div>
<svg class="s" style="left:269px;top:127px;" width="77" height="24" viewBox="0 0 77 24"><path d="M0.5 24 V4.5 Q0.5 0.5 4.5 0.5 H53.0 C60.0 0.5 63.0 6 66.0 12 C69.0 18 72.0 23.5 76.0 23.5" fill="#fff" stroke="#8c8c8c" stroke-width="1"/></svg>
<svg class="s" style="left:274px;top:132px;" width="16" height="13" viewBox="0 0 16 13"><rect x="0.5" y="0.5" width="15" height="12" fill="#a3b6d4" stroke="#53709f" stroke-width="1"/><rect x="1" y="1" width="14" height="2" fill="#6f8bb8"/><rect x="1" y="3" width="4" height="2" fill="#ffffff"/><rect x="6" y="3" width="4" height="2" fill="#f3f6fb"/><rect x="11" y="3" width="4" height="2" fill="#dfe8f6"/><rect x="1" y="6" width="4" height="2" fill="#ffffff"/><rect x="6" y="6" width="4" height="2" fill="#edf2fa"/><rect x="11" y="6" width="4" height="2" fill="#d6e3f5"/><rect x="1" y="9" width="4" height="3" fill="#fafcfe"/><rect x="6" y="9" width="4" height="3" fill="#e5edf9"/><rect x="11" y="9" width="4" height="3" fill="#cddcf3"/></svg>
<div class="t" style="left:299.00px;top:132.84px;font-size:12px;color:#b5263b;transform:scaleX(0.9050);">eladas</div>
<svg class="s" style="left:216px;top:127px;" width="62" height="24" viewBox="0 0 62 24"><path d="M0.5 24 V4.5 Q0.5 0.5 4.5 0.5 H38.0 C45.0 0.5 48.0 6 51.0 12 C54.0 18 57.0 23.5 61.0 23.5" fill="#fff" stroke="#a89070" stroke-width="1"/></svg>
<svg class="s" style="left:221px;top:132px;" width="16" height="13" viewBox="0 0 16 13"><rect x="0.5" y="0.5" width="15" height="12" fill="#a3b6d4" stroke="#53709f" stroke-width="1"/><rect x="1" y="1" width="14" height="2" fill="#6f8bb8"/><rect x="1" y="3" width="4" height="2" fill="#ffffff"/><rect x="6" y="3" width="4" height="2" fill="#f3f6fb"/><rect x="11" y="3" width="4" height="2" fill="#dfe8f6"/><rect x="1" y="6" width="4" height="2" fill="#ffffff"/><rect x="6" y="6" width="4" height="2" fill="#edf2fa"/><rect x="11" y="6" width="4" height="2" fill="#d6e3f5"/><rect x="1" y="9" width="4" height="3" fill="#fafcfe"/><rect x="6" y="9" width="4" height="3" fill="#e5edf9"/><rect x="11" y="9" width="4" height="3" fill="#cddcf3"/></svg>
<div class="t" style="left:245.00px;top:132.84px;font-size:12px;color:#b5263b;transform:scaleX(0.9802);">aru</div>
<div class="r" style="left:214px;top:150px;width:1705px;height:1px;background:#8a8a8a;"></div>
<div class="r" style="left:217px;top:150px;width:58px;height:1px;background:#ffffff;"></div>
<svg class="s" style="left:1904px;top:134px;" width="9" height="9" viewBox="0 0 9 9"><path d="M0.5 0.5L8.5 8.5M8.5 0.5L0.5 8.5" stroke="#2b2b2b" stroke-width="1.3"/></svg>
<div class="r" style="left:215px;top:151px;width:1688px;height:810px;background:#ffffff;"></div>
<div class="r" style="left:813px;top:151px;width:1090px;height:20px;background:#f5f6fc;"></div>
<div class="r" style="left:215px;top:151px;width:598px;height:20px;background:#dfe3e8;"></div>
<div class="r" style="left:719px;top:151px;width:94px;height:20px;background:linear-gradient(#ffd75a,#ffe57f);"></div>
<div class="r" style="left:342px;top:151px;width:1px;height:20px;background:#a9aeb5;"></div>
<div class="r" style="left:436px;top:151px;width:1px;height:20px;background:#a9aeb5;"></div>
<div class="r" style="left:530px;top:151px;width:1px;height:20px;background:#a9aeb5;"></div>
<div class="r" style="left:624px;top:151px;width:1px;height:20px;background:#a9aeb5;"></div>
<div class="r" style="left:718px;top:151px;width:1px;height:20px;background:#a9aeb5;"></div>
<div class="r" style="left:248px;top:151px;width:1px;height:20px;background:#a9aeb5;"></div>
<svg class="s" style="left:219px;top:156px;" width="14" height="12" viewBox="0 0 14 12"><path d="M13 1L1 11.5H13Z" fill="#e8ebef"/><path d="M13 1L1 11.5" stroke="#bcc9da" stroke-width="1"/></svg>
<div class="t" style="left:263.00px;top:153.15px;font-size:14px;color:#333;transform:scaleX(0.9883);">aru_kod</div>
<div class="t" style="left:357.00px;top:153.15px;font-size:14px;color:#333;transform:scaleX(1.0401);">kat_kod</div>
<div class="t" style="left:465.00px;top:153.15px;font-size:14px;color:#333;transform:scaleX(1.0633);">nev</div>
<div class="t" style="left:549.00px;top:153.15px;font-size:14px;color:#333;transform:scaleX(0.9525);">egyseg</div>
<div class="t" style="left:657.00px;top:153.15px;font-size:14px;color:#333;transform:scaleX(1.0443);">ar</div>
<svg class="s" style="left:329.5px;top:160px;" width="7.0" height="3.5" viewBox="0 0 7.0 3.5"><path d="M0 0H7 L3 3 Z" fill="#333"/></svg>
<svg class="s" style="left:423.5px;top:160px;" width="7.0" height="3.5" viewBox="0 0 7.0 3.5"><path d="M0 0H7 L3 3 Z" fill="#333"/></svg>
<svg class="s" style="left:517.5px;top:160px;" width="7.0" height="3.5" viewBox="0 0 7.0 3.5"><path d="M0 0H7 L3 3 Z" fill="#333"/></svg>
<svg class="s" style="left:611.5px;top:160px;" width="7.0" height="3.5" viewBox="0 0 7.0 3.5"><path d="M0 0H7 L3 3 Z" fill="#333"/></svg>
<svg class="s" style="left:705.5px;top:160px;" width="7.0" height="3.5" viewBox="0 0 7.0 3.5"><path d="M0 0H7 L3 3 Z" fill="#333"/></svg>
<div class="t" style="left:722.00px;top:153.15px;font-size:14px;color:#262626;font-style:italic;transform:scaleX(0.9566);">Hozzáadás</div>
<svg class="s" style="left:800.5px;top:160px;" width="7.0" height="3.5" viewBox="0 0 7.0 3.5"><path d="M0 0H7 L3 3 Z" fill="#222"/></svg>
<div style="position:absolute;left:215px;top:171px;width:1688px;height:790px;overflow:hidden;">
<div class="r" style="left:0px;top:0px;width:18px;height:19px;background:#ffd966;"></div>
<div class="r" style="left:18px;top:0px;width:15px;height:19px;background:#ffffff;"></div>
<div class="r" style="left:34px;top:0px;width:470px;height:19px;background:#a6cdf0;"></div>
<div class="r" style="left:504px;top:0px;width:94px;height:19px;background:#ffffff;"></div>
<div class="r" style="left:0px;top:19px;width:18px;height:1px;background:#a9aeb5;"></div>
<div class="r" style="left:18px;top:19px;width:581px;height:1px;background:#d5dbe7;"></div>
<div class="r" style="left:22px;top:5px;width:9px;height:9px;background:#fff;box-shadow:inset 0 0 0 1px #777;"></div>
<div class="r" style="left:24px;top:9px;width:5px;height:1px;background:#111;"></div>
<div class="r" style="left:26px;top:7px;width:1px;height:5px;background:#111;"></div>
<div class="t" style="left:118.99px;top:3.15px;font-size:14px;color:#111111;transform:scaleX(0.9000)">1</div>
<div class="t" style="left:212.99px;top:3.15px;font-size:14px;color:#111111;transform:scaleX(0.9000)">3</div>
<div style="position:absolute;left:222px;top:0px;width:92px;height:19px;overflow:hidden;">
<div class="t" style="left:3px;top:3.15px;font-size:14px;color:#111111;transform:scaleX(0.9850)">Tejföl 20%-os</div>
</div>
<div class="t" style="left:319.00px;top:3.15px;font-size:14px;color:#111111;transform:scaleX(0.9850)">doboz</div>
<div class="t" style="left:480.98px;top:3.15px;font-size:14px;color:#111111;transform:scaleX(0.9000)">175</div>
<div class="r" style="left:0px;top:20px;width:18px;height:19px;background:#dfe3e8;"></div>
<div class="r" style="left:18px;top:20px;width:15px;height:19px;background:#f2f2f2;"></div>
<div class="r" style="left:34px;top:20px;width:470px;height:19px;background:#f2f2f2;"></div>
<div class="r" style="left:504px;top:20px;width:94px;height:19px;background:#f2f2f2;"></div>
<div class="r" style="left:0px;top:39px;width:18px;height:1px;background:#a9aeb5;"></div>
<div class="r" style="left:18px;top:39px;width:581px;height:1px;background:#d5dbe7;"></div>
<div class="r" style="left:22px;top:25px;width:9px;height:9px;background:#fff;box-shadow:inset 0 0 0 1px #777;"></div>
<div class="r" style="left:24px;top:29px;width:5px;height:1px;background:#111;"></div>
<div class="r" style="left:26px;top:27px;width:1px;height:5px;background:#111;"></div>
<div class="t" style="left:118.99px;top:23.15px;font-size:14px;color:#111111;transform:scaleX(0.9000)">2</div>
<div class="t" style="left:212.99px;top:23.15px;font-size:14px;color:#111111;transform:scaleX(0.9000)">3</div>
<div style="position:absolute;left:222px;top:20px;width:92px;height:19px;overflow:hidden;">
<div class="t" style="left:3px;top:3.15px;font-size:14px;color:#111111;transform:scaleX(0.9850)">Camembert</div>
</div>
<div class="t" style="left:319.00px;top:23.15px;font-size:14px;color:#111111;transform:scaleX(0.9850)">doboz</div>
<div class="t" style="left:480.98px;top:23.15px;font-size:14px;color:#111111;transform:scaleX(0.9000)">239</div>
<div class="r" style="left:0px;top:40px;width:18px;height:19px;background:#dfe3e8;"></div>
<div class="r" style="left:18px;top:40px;width:15px;height:19px;background:#ffffff;"></div>
<div class="r" style="left:34px;top:40px;width:470px;height:19px;background:#ffffff;"></div>
<div class="r" style="left:504px;top:40px;width:94px;height:19px;background:#ffffff;"></div>
<div class="r" style="left:0px;top:59px;width:18px;height:1px;background:#a9aeb5;"></div>
<div class="r" style="left:18px;top:59px;width:581px;height:1px;background:#d5dbe7;"></div>
<div class="r" style="left:22px;top:45px;width:9px;height:9px;background:#fff;box-shadow:inset 0 0 0 1px #777;"></div>
<div class="r" style="left:24px;top:49px;width:5px;height:1px;background:#111;"></div>
<div class="r" style="left:26px;top:47px;width:1px;height:5px;background:#111;"></div>
<div class="t" style="left:118.99px;top:43.15px;font-size:14px;color:#111111;transform:scaleX(0.9000)">3</div>
<div class="t" style="left:212.99px;top:43.15px;font-size:14px;color:#111111;transform:scaleX(0.9000)">3</div>
<div style="position:absolute;left:222px;top:40px;width:92px;height:19px;overflow:hidden;">
<div class="t" style="left:3px;top:3.15px;font-size:14px;color:#111111;transform:scaleX(0.9850)">Tejszínhab-spray</div>
</div>
<div class="t" style="left:319.00px;top:43.15px;font-size:14px;color:#111111;transform:scaleX(0.9850)">liter</div>
<div class="t" style="left:480.98px;top:43.15px;font-size:14px;color:#111111;transform:scaleX(0.9000)">676</div>
<div class="r" style="left:0px;top:60px;width:18px;height:19px;background:#dfe3e8;"></div>
<div class="r" style="left:18px;top:60px;width:15px;height:19px;background:#f2f2f2;"></div>
<div class="r" style="left:34px;top:60px;width:470px;height:19px;background:#f2f2f2;"></div>
<div class="r" style="left:504px;top:60px;width:94px;height:19px;background:#f2f2f2;"></div>
<div class="r" style="left:0px;top:79px;width:18px;height:1px;background:#a9aeb5;"></div>
<div class="r" style="left:18px;top:79px;width:581px;height:1px;background:#d5dbe7;"></div>
<div class="r" style="left:22px;top:65px;width:9px;height:9px;background:#fff;box-shadow:inset 0 0 0 1px #777;"></div>
<div class="r" style="left:24px;top:69px;width:5px;height:1px;background:#111;"></div>
<div class="r" style="left:26px;top:67px;width:1px;height:5px;background:#111;"></div>
<div class="t" style="left:118.99px;top:63.15px;font-size:14px;color:#111111;transform:scaleX(0.9000)">4</div>
<div class="t" style="left:212.99px;top:63.15px;font-size:14px;color:#111111;transform:scaleX(0.9000)">3</div>
<div style="position:absolute;left:222px;top:60px;width:92px;height:19px;overflow:hidden;">
<div class="t" style="left:3px;top:3.15px;font-size:14px;color:#111111;transform:scaleX(0.9850)">Pötyös Túró Rudi</div>
</div>
<div class="t" style="left:319.00px;top:63.15px;font-size:14px;color:#111111;transform:scaleX(0.9850)">darab</div>
<div class="t" style="left:487.99px;top:63.15px;font-size:14px;color:#111111;transform:scaleX(0.9000)">42</div>
<div class="r" style="left:0px;top:80px;width:18px;height:19px;background:#dfe3e8;"></div>
<div class="r" style="left:18px;top:80px;width:15px;height:19px;background:#ffffff;"></div>
<div class="r" style="left:34px;top:80px;width:470px;height:19px;background:#ffffff;"></div>
<div class="r" style="left:504px;top:80px;width:94px;height:19px;background:#ffffff;"></div>
<div class="r" style="left:0px;top:99px;width:18px;height:1px;background:#a9aeb5;"></div>
<div class="r" style="left:18px;top:99px;width:581px;height:1px;background:#d5dbe7;"></div>
<div class="r" style="left:22px;top:85px;width:9px;height:9px;background:#fff;box-shadow:inset 0 0 0 1px #777;"></div>
<div class="r" style="left:24px;top:89px;width:5px;height:1px;background:#111;"></div>
<div class="r" style="left:26px;top:87px;width:1px;height:5px;background:#111;"></div>
<div class="t" style="left:118.99px;top:83.15px;font-size:14px;color:#111111;transform:scaleX(0.9000)">5</div>
<div class="t" style="left:212.99px;top:83.15px;font-size:14px;color:#111111;transform:scaleX(0.9000)">3</div>
<div style="position:absolute;left:222px;top:80px;width:92px;height:19px;overflow:hidden;">
<div class="t" style="left:3px;top:3.15px;font-size:14px;color:#111111;transform:scaleX(0.9850)">Sovány tej</div>
</div>
<div class="t" style="left:319.00px;top:83.15px;font-size:14px;color:#111111;transform:scaleX(0.9850)">liter</div>
<div class="t" style="left:480.98px;top:83.15px;font-size:14px;color:#111111;transform:scaleX(0.9000)">145</div>
<div class="r" style="left:0px;top:100px;width:18px;height:19px;background:#dfe3e8;"></div>
<div class="r" style="left:18px;top:100px;width:15px;height:19px;background:#f2f2f2;"></div>
<div class="r" style="left:34px;top:100px;width:470px;height:19px;background:#f2f2f2;"></div>
<div class="r" style="left:504px;top:100px;width:94px;height:19px;background:#f2f2f2;"></div>
<div class="r" style="left:0px;top:119px;width:18px;height:1px;background:#a9aeb5;"></div>
<div class="r" style="left:18px;top:119px;width:581px;height:1px;background:#d5dbe7;"></div>
<div class="r" style="left:22px;top:105px;width:9px;height:9px;background:#fff;box-shadow:inset 0 0 0 1px #777;"></div>
<div class="r" style="left:24px;top:109px;width:5px;height:1px;background:#111;"></div>
<div class="r" style="left:26px;top:107px;width:1px;height:5px;background:#111;"></div>
<div class="t" style="left:118.99px;top:103.15px;font-size:14px;color:#111111;transform:scaleX(0.9000)">6</div>
<div class="t" style="left:212.99px;top:103.15px;font-size:14px;color:#111111;transform:scaleX(0.9000)">3</div>
<div style="position:absolute;left:222px;top:100px;width:92px;height:19px;overflow:hidden;">
<div class="t" style="left:3px;top:3.15px;font-size:14px;color:#111111;transform:scaleX(0.9850)">Zsíros tej</div>
</div>
<div class="t" style="left:319.00px;top:103.15px;font-size:14px;color:#111111;transform:scaleX(0.9850)">liter</div>
<div class="t" style="left:480.98px;top:103.15px;font-size:14px;color:#111111;transform:scaleX(0.9000)">169</div>
<div class="r" style="left:0px;top:120px;width:18px;height:19px;background:#dfe3e8;"></div>
<div class="r" style="left:18px;top:120px;width:15px;height:19px;background:#ffffff;"></div>
<div class="r" style="left:34px;top:120px;width:470px;height:19px;background:#ffffff;"></div>
<div class="r" style="left:504px;top:120px;width:94px;height:19px;background:#ffffff;"></div>
<div class="r" style="left:0px;top:139px;width:18px;height:1px;background:#a9aeb5;"></div>
<div class="r" style="left:18px;top:139px;width:581px;height:1px;background:#d5dbe7;"></div>
<div class="r" style="left:22px;top:125px;width:9px;height:9px;background:#fff;box-shadow:inset 0 0 0 1px #777;"></div>
<div class="r" style="left:24px;top:129px;width:5px;height:1px;background:#111;"></div>
<div class="r" style="left:26px;top:127px;width:1px;height:5px;background:#111;"></div>
<div class="t" style="left:118.99px;top:123.15px;font-size:14px;color:#111111;transform:scaleX(0.9000)">7</div>
<div class="t" style="left:212.99px;top:123.15px;font-size:14px;color:#111111;transform:scaleX(0.9000)">3</div>
<div style="position:absolute;left:222px;top:120px;width:92px;height:19px;overflow:hidden;">
<div class="t" style="left:3px;top:3.15px;font-size:14px;color:#111111;transform:scaleX(0.9850)">Medve sajt</div>
</div>
<div class="t" style="left:319.00px;top:123.15px;font-size:14px;color:#111111;transform:scaleX(0.9850)">doboz</div>
<div class="t" style="left:480.98px;top:123.15px;font-size:14px;color:#111111;transform:scaleX(0.9000)">209</div>
<div class="r" style="left:0px;top:140px;width:18px;height:19px;background:#dfe3e8;"></div>
<div class="r" style="left:18px;top:140px;width:15px;height:19px;background:#f2f2f2;"></div>
<div class="r" style="left:34px;top:140px;width:470px;height:19px;background:#f2f2f2;"></div>
<div class="r" style="left:504px;top:140px;width:94px;height:19px;background:#f2f2f2;"></div>
<div class="r" style="left:0px;top:159px;width:18px;height:1px;background:#a9aeb5;"></div>
<div class="r" style="left:18px;top:159px;width:581px;height:1px;background:#d5dbe7;"></div>
<div class="r" style="left:22px;top:145px;width:9px;height:9px;background:#fff;box-shadow:inset 0 0 0 1px #777;"></div>
<div class="r" style="left:24px;top:149px;width:5px;height:1px;background:#111;"></div>
<div class="r" style="left:26px;top:147px;width:1px;height:5px;background:#111;"></div>
<div class="t" style="left:118.99px;top:143.15px;font-size:14px;color:#111111;transform:scaleX(0.9000)">8</div>
<div class="t" style="left:212.99px;top:143.15px;font-size:14px;color:#111111;transform:scaleX(0.9000)">3</div>
<div style="position:absolute;left:222px;top:140px;width:92px;height:19px;overflow:hidden;">
<div class="t" style="left:3px;top:3.15px;font-size:14px;color:#111111;transform:scaleX(0.9850)">Eidami sajt</div>
</div>
<div class="t" style="left:319.00px;top:143.15px;font-size:14px;color:#111111;transform:scaleX(0.9850)">doboz</div>
<div class="t" style="left:473.97px;top:143.15px;font-size:14px;color:#111111;transform:scaleX(0.9000)">1222</div>
<div class="r" style="left:0px;top:160px;width:18px;height:19px;background:#dfe3e8;"></div>
<div class="r" style="left:18px;top:160px;width:15px;height:19px;background:#ffffff;"></div>
<div class="r" style="left:34px;top:160px;width:470px;height:19px;background:#ffffff;"></div>
<div class="r" style="left:504px;top:160px;width:94px;height:19px;background:#ffffff;"></div>
<div class="r" style="left:0px;top:179px;width:18px;height:1px;background:#a9aeb5;"></div>
<div class="r" style="left:18px;top:179px;width:581px;height:1px;background:#d5dbe7;"></div>
<div class="r" style="left:22px;top:165px;width:9px;height:9px;background:#fff;box-shadow:inset 0 0 0 1px #777;"></div>
<div class="r" style="left:24px;top:169px;width:5px;height:1px;background:#111;"></div>
<div class="r" style="left:26px;top:167px;width:1px;height:5px;background:#111;"></div>
<div class="t" style="left:118.99px;top:163.15px;font-size:14px;color:#111111;transform:scaleX(0.9000)">9</div>
<div class="t" style="left:212.99px;top:163.15px;font-size:14px;color:#111111;transform:scaleX(0.9000)">1</div>
<div style="position:absolute;left:222px;top:160px;width:92px;height:19px;overflow:hidden;">
<div class="t" style="left:3px;top:3.15px;font-size:14px;color:#111111;transform:scaleX(0.9850)">Téliszalámi</div>
</div>
<div class="t" style="left:319.00px;top:163.15px;font-size:14px;color:#111111;transform:scaleX(0.9850)">kg</div>
<div class="t" style="left:473.97px;top:163.15px;font-size:14px;color:#111111;transform:scaleX(0.9000)">2899</div>
<div class="r" style="left:0px;top:180px;width:18px;height:19px;background:#dfe3e8;"></div>
<div class="r" style="left:18px;top:180px;width:15px;height:19px;background:#f2f2f2;"></div>
<div class="r" style="left:34px;top:180px;width:470px;height:19px;background:#f2f2f2;"></div>
<div class="r" style="left:504px;top:180px;width:94px;height:19px;background:#f2f2f2;"></div>
<div class="r" style="left:0px;top:199px;width:18px;height:1px;background:#a9aeb5;"></div>
<div class="r" style="left:18px;top:199px;width:581px;height:1px;background:#d5dbe7;"></div>
<div class="r" style="left:22px;top:185px;width:9px;height:9px;background:#fff;box-shadow:inset 0 0 0 1px #777;"></div>
<div class="r" style="left:24px;top:189px;width:5px;height:1px;background:#111;"></div>
<div class="r" style="left:26px;top:187px;width:1px;height:5px;background:#111;"></div>
<div class="t" style="left:111.99px;top:183.15px;font-size:14px;color:#111111;transform:scaleX(0.9000)">10</div>
<div class="t" style="left:212.99px;top:183.15px;font-size:14px;color:#111111;transform:scaleX(0.9000)">1</div>
<div style="position:absolute;left:222px;top:180px;width:92px;height:19px;overflow:hidden;">
<div class="t" style="left:3px;top:3.15px;font-size:14px;color:#111111;transform:scaleX(0.9850)">Bánáti kolbász</div>
</div>
<div class="t" style="left:319.00px;top:183.15px;font-size:14px;color:#111111;transform:scaleX(0.9850)">kg</div>
<div class="t" style="left:480.98px;top:183.15px;font-size:14px;color:#111111;transform:scaleX(0.9000)">549</div>
<div class="r" style="left:0px;top:200px;width:18px;height:19px;background:#dfe3e8;"></div>
<div class="r" style="left:18px;top:200px;width:15px;height:19px;background:#ffffff;"></div>
<div class="r" style="left:34px;top:200px;width:470px;height:19px;background:#ffffff;"></div>
<div class="r" style="left:504px;top:200px;width:94px;height:19px;background:#ffffff;"></div>
<div class="r" style="left:0px;top:219px;width:18px;height:1px;background:#a9aeb5;"></div>
<div class="r" style="left:18px;top:219px;width:581px;height:1px;background:#d5dbe7;"></div>
<div class="r" style="left:22px;top:205px;width:9px;height:9px;background:#fff;box-shadow:inset 0 0 0 1px #777;"></div>
<div class="r" style="left:24px;top:209px;width:5px;height:1px;background:#111;"></div>
<div class="r" style="left:26px;top:207px;width:1px;height:5px;background:#111;"></div>
<div class="t" style="left:112.92px;top:203.15px;font-size:14px;color:#111111;transform:scaleX(0.9000)">11</div>
<div class="t" style="left:212.99px;top:203.15px;font-size:14px;color:#111111;transform:scaleX(0.9000)">1</div>
<div style="position:absolute;left:222px;top:200px;width:92px;height:19px;overflow:hidden;">
<div class="t" style="left:3px;top:3.15px;font-size:14px;color:#111111;transform:scaleX(0.9850)">Füstölt-főtt pulyka</div>
</div>
<div class="t" style="left:319.00px;top:203.15px;font-size:14px;color:#111111;transform:scaleX(0.9850)">kg</div>
<div class="t" style="left:474.91px;top:203.15px;font-size:14px;color:#111111;transform:scaleX(0.9000)">1199</div>
<div class="r" style="left:0px;top:220px;width:18px;height:19px;background:#dfe3e8;"></div>
<div class="r" style="left:18px;top:220px;width:15px;height:19px;background:#f2f2f2;"></div>
<div class="r" style="left:34px;top:220px;width:470px;height:19px;background:#f2f2f2;"></div>
<div class="r" style="left:504px;top:220px;width:94px;height:19px;background:#f2f2f2;"></div>
<div class="r" style="left:0px;top:239px;width:18px;height:1px;background:#a9aeb5;"></div>
<div class="r" style="left:18px;top:239px;width:581px;height:1px;background:#d5dbe7;"></div>
<div class="r" style="left:22px;top:225px;width:9px;height:9px;background:#fff;box-shadow:inset 0 0 0 1px #777;"></div>
<div class="r" style="left:24px;top:229px;width:5px;height:1px;background:#111;"></div>
<div class="r" style="left:26px;top:227px;width:1px;height:5px;background:#111;"></div>
<div class="t" style="left:111.99px;top:223.15px;font-size:14px;color:#111111;transform:scaleX(0.9000)">12</div>
<div class="t" style="left:212.99px;top:223.15px;font-size:14px;color:#111111;transform:scaleX(0.9000)">1</div>
<div style="position:absolute;left:222px;top:220px;width:92px;height:19px;overflow:hidden;">
<div class="t" style="left:3px;top:3.15px;font-size:14px;color:#111111;transform:scaleX(0.9850)">Füstölt-főtt pulyka</div>
</div>
<div class="t" style="left:319.00px;top:223.15px;font-size:14px;color:#111111;transform:scaleX(0.9850)">kg</div>
<div class="t" style="left:480.98px;top:223.15px;font-size:14px;color:#111111;transform:scaleX(0.9000)">629</div>
<div class="r" style="left:0px;top:240px;width:18px;height:19px;background:#dfe3e8;"></div>
<div class="r" style="left:18px;top:240px;width:15px;height:19px;background:#ffffff;"></div>
<div class="r" style="left:34px;top:240px;width:470px;height:19px;background:#ffffff;"></div>
<div class="r" style="left:504px;top:240px;width:94px;height:19px;background:#ffffff;"></div>
<div class="r" style="left:0px;top:259px;width:18px;height:1px;background:#a9aeb5;"></div>
<div class="r" style="left:18px;top:259px;width:581px;height:1px;background:#d5dbe7;"></div>
<div class="r" style="left:22px;top:245px;width:9px;height:9px;background:#fff;box-shadow:inset 0 0 0 1px #777;"></div>
<div class="r" style="left:24px;top:249px;width:5px;height:1px;background:#111;"></div>
<div class="r" style="left:26px;top:247px;width:1px;height:5px;background:#111;"></div>
<div class="t" style="left:111.99px;top:243.15px;font-size:14px;color:#111111;transform:scaleX(0.9000)">13</div>
<div class="t" style="left:212.99px;top:243.15px;font-size:14px;color:#111111;transform:scaleX(0.9000)">1</div>
<div style="position:absolute;left:222px;top:240px;width:92px;height:19px;overflow:hidden;">
<div class="t" style="left:3px;top:3.15px;font-size:14px;color:#111111;transform:scaleX(0.9850)">Baromfi párizsi</div>
</div>
<div class="t" style="left:319.00px;top:243.15px;font-size:14px;color:#111111;transform:scaleX(0.9850)">kg</div>
<div class="t" style="left:480.98px;top:243.15px;font-size:14px;color:#111111;transform:scaleX(0.9000)">209</div>
<div class="r" style="left:0px;top:260px;width:18px;height:19px;background:#dfe3e8;"></div>
<div class="r" style="left:18px;top:260px;width:15px;height:19px;background:#f2f2f2;"></div>
<div class="r" style="left:34px;top:260px;width:470px;height:19px;background:#f2f2f2;"></div>
<div class="r" style="left:504px;top:260px;width:94px;height:19px;background:#f2f2f2;"></div>
<div class="r" style="left:0px;top:279px;width:18px;height:1px;background:#a9aeb5;"></div>
<div class="r" style="left:18px;top:279px;width:581px;height:1px;background:#d5dbe7;"></div>
<div class="r" style="left:22px;top:265px;width:9px;height:9px;background:#fff;box-shadow:inset 0 0 0 1px #777;"></div>
<div class="r" style="left:24px;top:269px;width:5px;height:1px;background:#111;"></div>
<div class="r" style="left:26px;top:267px;width:1px;height:5px;background:#111;"></div>
<div class="t" style="left:111.99px;top:263.15px;font-size:14px;color:#111111;transform:scaleX(0.9000)">14</div>
<div class="t" style="left:212.99px;top:263.15px;font-size:14px;color:#111111;transform:scaleX(0.9000)">1</div>
<div style="position:absolute;left:222px;top:260px;width:92px;height:19px;overflow:hidden;">
<div class="t" style="left:3px;top:3.15px;font-size:14px;color:#111111;transform:scaleX(0.9850)">Szeletelt bacon</div>
</div>
<div class="t" style="left:319.00px;top:263.15px;font-size:14px;color:#111111;transform:scaleX(0.9850)">kg</div>
<div class="t" style="left:473.97px;top:263.15px;font-size:14px;color:#111111;transform:scaleX(0.9000)">1490</div>
<div class="r" style="left:0px;top:280px;width:18px;height:19px;background:#dfe3e8;"></div>
<div class="r" style="left:18px;top:280px;width:15px;height:19px;background:#ffffff;"></div>
<div class="r" style="left:34px;top:280px;width:470px;height:19px;background:#ffffff;"></div>
<div class="r" style="left:504px;top:280px;width:94px;height:19px;background:#ffffff;"></div>
<div class="r" style="left:0px;top:299px;width:18px;height:1px;background:#a9aeb5;"></div>
<div class="r" style="left:18px;top:299px;width:581px;height:1px;background:#d5dbe7;"></div>
<div class="r" style="left:22px;top:285px;width:9px;height:9px;background:#fff;box-shadow:inset 0 0 0 1px #777;"></div>
<div class="r" style="left:24px;top:289px;width:5px;height:1px;background:#111;"></div>
<div class="r" style="left:26px;top:287px;width:1px;height:5px;background:#111;"></div>
<div class="t" style="left:111.99px;top:283.15px;font-size:14px;color:#111111;transform:scaleX(0.9000)">15</div>
<div class="t" style="left:212.99px;top:283.15px;font-size:14px;color:#111111;transform:scaleX(0.9000)">1</div>
<div style="position:absolute;left:222px;top:280px;width:92px;height:19px;overflow:hidden;">
<div class="t" style="left:3px;top:3.15px;font-size:14px;color:#111111;transform:scaleX(0.9850)">Erdélyi szalonna</div>
</div>
<div class="t" style="left:319.00px;top:283.15px;font-size:14px;color:#111111;transform:scaleX(0.9850)">kg</div>
<div class="t" style="left:480.98px;top:283.15px;font-size:14px;color:#111111;transform:scaleX(0.9000)">599</div>
<div class="r" style="left:0px;top:300px;width:18px;height:19px;background:#dfe3e8;"></div>
<div class="r" style="left:18px;top:300px;width:15px;height:19px;background:#f2f2f2;"></div>
<div class="r" style="left:34px;top:300px;width:470px;height:19px;background:#f2f2f2;"></div>
<div class="r" style="left:504px;top:300px;width:94px;height:19px;background:#f2f2f2;"></div>
<div class="r" style="left:0px;top:319px;width:18px;height:1px;background:#a9aeb5;"></div>
<div class="r" style="left:18px;top:319px;width:581px;height:1px;background:#d5dbe7;"></div>
<div class="r" style="left:22px;top:305px;width:9px;height:9px;background:#fff;box-shadow:inset 0 0 0 1px #777;"></div>
<div class="r" style="left:24px;top:309px;width:5px;height:1px;background:#111;"></div>
<div class="r" style="left:26px;top:307px;width:1px;height:5px;background:#111;"></div>
<div class="t" style="left:111.99px;top:303.15px;font-size:14px;color:#111111;transform:scaleX(0.9000)">16</div>
<div class="t" style="left:212.99px;top:303.15px;font-size:14px;color:#111111;transform:scaleX(0.9000)">1</div>
<div style="position:absolute;left:222px;top:300px;width:92px;height:19px;overflow:hidden;">
<div class="t" style="left:3px;top:3.15px;font-size:14px;color:#111111;transform:scaleX(0.9850)">Farmer felvágott</div>
</div>
<div class="t" style="left:319.00px;top:303.15px;font-size:14px;color:#111111;transform:scaleX(0.9850)">kg</div>
<div class="t" style="left:480.98px;top:303.15px;font-size:14px;color:#111111;transform:scaleX(0.9000)">579</div>
<div class="r" style="left:0px;top:320px;width:18px;height:19px;background:#dfe3e8;"></div>
<div class="r" style="left:18px;top:320px;width:15px;height:19px;background:#ffffff;"></div>
<div class="r" style="left:34px;top:320px;width:470px;height:19px;background:#ffffff;"></div>
<div class="r" style="left:504px;top:320px;width:94px;height:19px;background:#ffffff;"></div>
<div class="r" style="left:0px;top:339px;width:18px;height:1px;background:#a9aeb5;"></div>
<div class="r" style="left:18px;top:339px;width:581px;height:1px;background:#d5dbe7;"></div>
<div class="r" style="left:22px;top:325px;width:9px;height:9px;background:#fff;box-shadow:inset 0 0 0 1px #777;"></div>
<div class="r" style="left:24px;top:329px;width:5px;height:1px;background:#111;"></div>
<div class="r" style="left:26px;top:327px;width:1px;height:5px;background:#111;"></div>
<div class="t" style="left:111.99px;top:323.15px;font-size:14px;color:#111111;transform:scaleX(0.9000)">17</div>
<div class="t" style="left:212.99px;top:323.15px;font-size:14px;color:#111111;transform:scaleX(0.9000)">1</div>
<div style="position:absolute;left:222px;top:320px;width:92px;height:19px;overflow:hidden;">
<div class="t" style="left:3px;top:3.15px;font-size:14px;color:#111111;transform:scaleX(0.9850)">Sertéscomb csont</div>
</div>
<div class="t" style="left:319.00px;top:323.15px;font-size:14px;color:#111111;transform:scaleX(0.9850)">kg</div>
<div class="t" style="left:480.98px;top:323.15px;font-size:14px;color:#111111;transform:scaleX(0.9000)">829</div>
<div class="r" style="left:0px;top:340px;width:18px;height:19px;background:#dfe3e8;"></div>
<div class="r" style="left:18px;top:340px;width:15px;height:19px;background:#f2f2f2;"></div>
<div class="r" style="left:34px;top:340px;width:470px;height:19px;background:#f2f2f2;"></div>
<div class="r" style="left:504px;top:340px;width:94px;height:19px;background:#f2f2f2;"></div>
<div class="r" style="left:0px;top:359px;width:18px;height:1px;background:#a9aeb5;"></div>
<div class="r" style="left:18px;top:359px;width:581px;height:1px;background:#d5dbe7;"></div>
<div class="r" style="left:22px;top:345px;width:9px;height:9px;background:#fff;box-shadow:inset 0 0 0 1px #777;"></div>
<div class="r" style="left:24px;top:349px;width:5px;height:1px;background:#111;"></div>
<div class="r" style="left:26px;top:347px;width:1px;height:5px;background:#111;"></div>
<div class="t" style="left:111.99px;top:343.15px;font-size:14px;color:#111111;transform:scaleX(0.9000)">18</div>
<div class="t" style="left:212.99px;top:343.15px;font-size:14px;color:#111111;transform:scaleX(0.9000)">1</div>
<div style="position:absolute;left:222px;top:340px;width:92px;height:19px;overflow:hidden;">
<div class="t" style="left:3px;top:3.15px;font-size:14px;color:#111111;transform:scaleX(0.9850)">Sertés hátsó csont</div>
</div>
<div class="t" style="left:319.00px;top:343.15px;font-size:14px;color:#111111;transform:scaleX(0.9850)">kg</div>
<div class="t" style="left:480.98px;top:343.15px;font-size:14px;color:#111111;transform:scaleX(0.9000)">559</div>
<div class="r" style="left:0px;top:360px;width:18px;height:19px;background:#dfe3e8;"></div>
<div class="r" style="left:18px;top:360px;width:15px;height:19px;background:#ffffff;"></div>
<div class="r" style="left:34px;top:360px;width:470px;height:19px;background:#ffffff;"></div>
<div class="r" style="left:504px;top:360px;width:94px;height:19px;background:#ffffff;"></div>
<div class="r" style="left:0px;top:379px;width:18px;height:1px;background:#a9aeb5;"></div>
<div class="r" style="left:18px;top:379px;width:581px;height:1px;background:#d5dbe7;"></div>
<div class="r" style="left:22px;top:365px;width:9px;height:9px;background:#fff;box-shadow:inset 0 0 0 1px #777;"></div>
<div class="r" style="left:24px;top:369px;width:5px;height:1px;background:#111;"></div>
<div class="r" style="left:26px;top:367px;width:1px;height:5px;background:#111;"></div>
<div class="t" style="left:111.99px;top:363.15px;font-size:14px;color:#111111;transform:scaleX(0.9000)">19</div>
<div class="t" style="left:212.99px;top:363.15px;font-size:14px;color:#111111;transform:scaleX(0.9000)">1</div>
<div style="position:absolute;left:222px;top:360px;width:92px;height:19px;overflow:hidden;">
<div class="t" style="left:3px;top:3.15px;font-size:14px;color:#111111;transform:scaleX(0.9850)">Marha darálthús</div>
</div>
<div class="t" style="left:319.00px;top:363.15px;font-size:14px;color:#111111;transform:scaleX(0.9850)">kg</div>
<div class="t" style="left:480.98px;top:363.15px;font-size:14px;color:#111111;transform:scaleX(0.9000)">899</div>
<div class="r" style="left:0px;top:380px;width:18px;height:19px;background:#dfe3e8;"></div>
<div class="r" style="left:18px;top:380px;width:15px;height:19px;background:#f2f2f2;"></div>
<div class="r" style="left:34px;top:380px;width:470px;height:19px;background:#f2f2f2;"></div>
<div class="r" style="left:504px;top:380px;width:94px;height:19px;background:#f2f2f2;"></div>
<div class="r" style="left:0px;top:399px;width:18px;height:1px;background:#a9aeb5;"></div>
<div class="r" style="left:18px;top:399px;width:581px;height:1px;background:#d5dbe7;"></div>
<div class="r" style="left:22px;top:385px;width:9px;height:9px;background:#fff;box-shadow:inset 0 0 0 1px #777;"></div>
<div class="r" style="left:24px;top:389px;width:5px;height:1px;background:#111;"></div>
<div class="r" style="left:26px;top:387px;width:1px;height:5px;background:#111;"></div>
<div class="t" style="left:111.99px;top:383.15px;font-size:14px;color:#111111;transform:scaleX(0.9000)">20</div>
<div class="t" style="left:212.99px;top:383.15px;font-size:14px;color:#111111;transform:scaleX(0.9000)">1</div>
<div style="position:absolute;left:222px;top:380px;width:92px;height:19px;overflow:hidden;">
<div class="t" style="left:3px;top:3.15px;font-size:14px;color:#111111;transform:scaleX(0.9850)">Sertéslapocka</div>
</div>
<div class="t" style="left:319.00px;top:383.15px;font-size:14px;color:#111111;transform:scaleX(0.9850)">kg</div>
<div class="t" style="left:480.98px;top:383.15px;font-size:14px;color:#111111;transform:scaleX(0.9000)">739</div>
<div class="r" style="left:0px;top:400px;width:18px;height:19px;background:#dfe3e8;"></div>
<div class="r" style="left:18px;top:400px;width:15px;height:19px;background:#ffffff;"></div>
<div class="r" style="left:34px;top:400px;width:470px;height:19px;background:#ffffff;"></div>
<div class="r" style="left:504px;top:400px;width:94px;height:19px;background:#ffffff;"></div>
<div class="r" style="left:0px;top:419px;width:18px;height:1px;background:#a9aeb5;"></div>
<div class="r" style="left:18px;top:419px;width:581px;height:1px;background:#d5dbe7;"></div>
<div class="r" style="left:22px;top:405px;width:9px;height:9px;background:#fff;box-shadow:inset 0 0 0 1px #777;"></div>
<div class="r" style="left:24px;top:409px;width:5px;height:1px;background:#111;"></div>
<div class="r" style="left:26px;top:407px;width:1px;height:5px;background:#111;"></div>
<div class="t" style="left:111.99px;top:403.15px;font-size:14px;color:#111111;transform:scaleX(0.9000)">21</div>
<div class="t" style="left:212.99px;top:403.15px;font-size:14px;color:#111111;transform:scaleX(0.9000)">1</div>
<div style="position:absolute;left:222px;top:400px;width:92px;height:19px;overflow:hidden;">
<div class="t" style="left:3px;top:3.15px;font-size:14px;color:#111111;transform:scaleX(0.9850)">Sertés darálthús</div>
</div>
<div class="t" style="left:319.00px;top:403.15px;font-size:14px;color:#111111;transform:scaleX(0.9850)">kg</div>
<div class="t" style="left:480.98px;top:403.15px;font-size:14px;color:#111111;transform:scaleX(0.9000)">539</div>
<div class="r" style="left:0px;top:420px;width:18px;height:19px;background:#dfe3e8;"></div>
<div class="r" style="left:18px;top:420px;width:15px;height:19px;background:#f2f2f2;"></div>
<div class="r" style="left:34px;top:420px;width:470px;height:19px;background:#f2f2f2;"></div>
<div class="r" style="left:504px;top:420px;width:94px;height:19px;background:#f2f2f2;"></div>
<div class="r" style="left:0px;top:439px;width:18px;height:1px;background:#a9aeb5;"></div>
<div class="r" style="left:18px;top:439px;width:581px;height:1px;background:#d5dbe7;"></div>
<div class="r" style="left:22px;top:425px;width:9px;height:9px;background:#fff;box-shadow:inset 0 0 0 1px #777;"></div>
<div class="r" style="left:24px;top:429px;width:5px;height:1px;background:#111;"></div>
<div class="r" style="left:26px;top:427px;width:1px;height:5px;background:#111;"></div>
<div class="t" style="left:111.99px;top:423.15px;font-size:14px;color:#111111;transform:scaleX(0.9000)">22</div>
<div class="t" style="left:212.99px;top:423.15px;font-size:14px;color:#111111;transform:scaleX(0.9000)">1</div>
<div style="position:absolute;left:222px;top:420px;width:92px;height:19px;overflow:hidden;">
<div class="t" style="left:3px;top:3.15px;font-size:14px;color:#111111;transform:scaleX(0.9850)">Sertéstarja csont</div>
</div>
<div class="t" style="left:319.00px;top:423.15px;font-size:14px;color:#111111;transform:scaleX(0.9850)">kg</div>
<div class="t" style="left:473.97px;top:423.15px;font-size:14px;color:#111111;transform:scaleX(0.9000)">1099</div>
<div class="r" style="left:0px;top:440px;width:18px;height:19px;background:#dfe3e8;"></div>
<div class="r" style="left:18px;top:440px;width:15px;height:19px;background:#ffffff;"></div>
<div class="r" style="left:34px;top:440px;width:470px;height:19px;background:#ffffff;"></div>
<div class="r" style="left:504px;top:440px;width:94px;height:19px;background:#ffffff;"></div>
<div class="r" style="left:0px;top:459px;width:18px;height:1px;background:#a9aeb5;"></div>
<div class="r" style="left:18px;top:459px;width:581px;height:1px;background:#d5dbe7;"></div>
<div class="r" style="left:22px;top:445px;width:9px;height:9px;background:#fff;box-shadow:inset 0 0 0 1px #777;"></div>
<div class="r" style="left:24px;top:449px;width:5px;height:1px;background:#111;"></div>
<div class="r" style="left:26px;top:447px;width:1px;height:5px;background:#111;"></div>
<div class="t" style="left:111.99px;top:443.15px;font-size:14px;color:#111111;transform:scaleX(0.9000)">23</div>
<div class="t" style="left:212.99px;top:443.15px;font-size:14px;color:#111111;transform:scaleX(0.9000)">1</div>
<div style="position:absolute;left:222px;top:440px;width:92px;height:19px;overflow:hidden;">
<div class="t" style="left:3px;top:3.15px;font-size:14px;color:#111111;transform:scaleX(0.9850)">Marha párizsi</div>
</div>
<div class="t" style="left:319.00px;top:443.15px;font-size:14px;color:#111111;transform:scaleX(0.9850)">kg</div>
<div class="t" style="left:480.98px;top:443.15px;font-size:14px;color:#111111;transform:scaleX(0.9000)">899</div>
<div class="r" style="left:0px;top:460px;width:18px;height:19px;background:#dfe3e8;"></div>
<div class="r" style="left:18px;top:460px;width:15px;height:19px;background:#f2f2f2;"></div>
<div class="r" style="left:34px;top:460px;width:470px;height:19px;background:#f2f2f2;"></div>
<div class="r" style="left:504px;top:460px;width:94px;height:19px;background:#f2f2f2;"></div>
<div class="r" style="left:0px;top:479px;width:18px;height:1px;background:#a9aeb5;"></div>
<div class="r" style="left:18px;top:479px;width:581px;height:1px;background:#d5dbe7;"></div>
<div class="r" style="left:22px;top:465px;width:9px;height:9px;background:#fff;box-shadow:inset 0 0 0 1px #777;"></div>
<div class="r" style="left:24px;top:469px;width:5px;height:1px;background:#111;"></div>
<div class="r" style="left:26px;top:467px;width:1px;height:5px;background:#111;"></div>
<div class="t" style="left:111.99px;top:463.15px;font-size:14px;color:#111111;transform:scaleX(0.9000)">24</div>
<div class="t" style="left:212.99px;top:463.15px;font-size:14px;color:#111111;transform:scaleX(0.9000)">2</div>
<div style="position:absolute;left:222px;top:460px;width:92px;height:19px;overflow:hidden;">
<div class="t" style="left:3px;top:3.15px;font-size:14px;color:#111111;transform:scaleX(0.9850)">Sütőtök</div>
</div>
<div class="t" style="left:319.00px;top:463.15px;font-size:14px;color:#111111;transform:scaleX(0.9850)">kg</div>
<div class="t" style="left:487.99px;top:463.15px;font-size:14px;color:#111111;transform:scaleX(0.9000)">49</div>
<div class="r" style="left:0px;top:480px;width:18px;height:19px;background:#dfe3e8;"></div>
<div class="r" style="left:18px;top:480px;width:15px;height:19px;background:#ffffff;"></div>
<div class="r" style="left:34px;top:480px;width:470px;height:19px;background:#ffffff;"></div>
<div class="r" style="left:504px;top:480px;width:94px;height:19px;background:#ffffff;"></div>
<div class="r" style="left:0px;top:499px;width:18px;height:1px;background:#a9aeb5;"></div>
<div class="r" style="left:18px;top:499px;width:581px;height:1px;background:#d5dbe7;"></div>
<div class="r" style="left:22px;top:485px;width:9px;height:9px;background:#fff;box-shadow:inset 0 0 0 1px #777;"></div>
<div class="r" style="left:24px;top:489px;width:5px;height:1px;background:#111;"></div>
<div class="r" style="left:26px;top:487px;width:1px;height:5px;background:#111;"></div>
<div class="t" style="left:111.99px;top:483.15px;font-size:14px;color:#111111;transform:scaleX(0.9000)">25</div>
<div class="t" style="left:212.99px;top:483.15px;font-size:14px;color:#111111;transform:scaleX(0.9000)">2</div>
<div style="position:absolute;left:222px;top:480px;width:92px;height:19px;overflow:hidden;">
<div class="t" style="left:3px;top:3.15px;font-size:14px;color:#111111;transform:scaleX(0.9850)">Karfiol</div>
</div>
<div class="t" style="left:319.00px;top:483.15px;font-size:14px;color:#111111;transform:scaleX(0.9850)">kg</div>
<div class="t" style="left:480.98px;top:483.15px;font-size:14px;color:#111111;transform:scaleX(0.9000)">168</div>
<div class="r" style="left:0px;top:500px;width:18px;height:19px;background:#dfe3e8;"></div>
<div class="r" style="left:18px;top:500px;width:15px;height:19px;background:#f2f2f2;"></div>
<div class="r" style="left:34px;top:500px;width:470px;height:19px;background:#f2f2f2;"></div>
<div class="r" style="left:504px;top:500px;width:94px;height:19px;background:#f2f2f2;"></div>
<div class="r" style="left:0px;top:519px;width:18px;height:1px;background:#a9aeb5;"></div>
<div class="r" style="left:18px;top:519px;width:581px;height:1px;background:#d5dbe7;"></div>
<div class="r" style="left:22px;top:505px;width:9px;height:9px;background:#fff;box-shadow:inset 0 0 0 1px #777;"></div>
<div class="r" style="left:24px;top:509px;width:5px;height:1px;background:#111;"></div>
<div class="r" style="left:26px;top:507px;width:1px;height:5px;background:#111;"></div>
<div class="t" style="left:111.99px;top:503.15px;font-size:14px;color:#111111;transform:scaleX(0.9000)">26</div>
<div class="t" style="left:212.99px;top:503.15px;font-size:14px;color:#111111;transform:scaleX(0.9000)">2</div>
<div style="position:absolute;left:222px;top:500px;width:92px;height:19px;overflow:hidden;">
<div class="t" style="left:3px;top:3.15px;font-size:14px;color:#111111;transform:scaleX(0.9850)">Zöldborsó</div>
</div>
<div class="t" style="left:319.00px;top:503.15px;font-size:14px;color:#111111;transform:scaleX(0.9850)">doboz</div>
<div class="t" style="left:480.98px;top:503.15px;font-size:14px;color:#111111;transform:scaleX(0.9000)">489</div>
<div class="r" style="left:0px;top:520px;width:18px;height:19px;background:#dfe3e8;"></div>
<div class="r" style="left:18px;top:520px;width:15px;height:19px;background:#ffffff;"></div>
<div class="r" style="left:34px;top:520px;width:470px;height:19px;background:#ffffff;"></div>
<div class="r" style="left:504px;top:520px;width:94px;height:19px;background:#ffffff;"></div>
<div class="r" style="left:0px;top:539px;width:18px;height:1px;background:#a9aeb5;"></div>
<div class="r" style="left:18px;top:539px;width:581px;height:1px;background:#d5dbe7;"></div>
<div class="r" style="left:22px;top:525px;width:9px;height:9px;background:#fff;box-shadow:inset 0 0 0 1px #777;"></div>
<div class="r" style="left:24px;top:529px;width:5px;height:1px;background:#111;"></div>
<div class="r" style="left:26px;top:527px;width:1px;height:5px;background:#111;"></div>
<div class="t" style="left:111.99px;top:523.15px;font-size:14px;color:#111111;transform:scaleX(0.9000)">27</div>
<div class="t" style="left:212.99px;top:523.15px;font-size:14px;color:#111111;transform:scaleX(0.9000)">2</div>
<div style="position:absolute;left:222px;top:520px;width:92px;height:19px;overflow:hidden;">
<div class="t" style="left:3px;top:3.15px;font-size:14px;color:#111111;transform:scaleX(0.9850)">Téli alma</div>
</div>
<div class="t" style="left:319.00px;top:523.15px;font-size:14px;color:#111111;transform:scaleX(0.9850)">kg</div>
<div class="t" style="left:480.98px;top:523.15px;font-size:14px;color:#111111;transform:scaleX(0.9000)">199</div>
<div class="r" style="left:0px;top:540px;width:18px;height:19px;background:#dfe3e8;"></div>
<div class="r" style="left:18px;top:540px;width:15px;height:19px;background:#f2f2f2;"></div>
<div class="r" style="left:34px;top:540px;width:470px;height:19px;background:#f2f2f2;"></div>
<div class="r" style="left:504px;top:540px;width:94px;height:19px;background:#f2f2f2;"></div>
<div class="r" style="left:0px;top:559px;width:18px;height:1px;background:#a9aeb5;"></div>
<div class="r" style="left:18px;top:559px;width:581px;height:1px;background:#d5dbe7;"></div>
<div class="r" style="left:22px;top:545px;width:9px;height:9px;background:#fff;box-shadow:inset 0 0 0 1px #777;"></div>
<div class="r" style="left:24px;top:549px;width:5px;height:1px;background:#111;"></div>
<div class="r" style="left:26px;top:547px;width:1px;height:5px;background:#111;"></div>
<div class="t" style="left:111.99px;top:543.15px;font-size:14px;color:#111111;transform:scaleX(0.9000)">28</div>
<div class="t" style="left:212.99px;top:543.15px;font-size:14px;color:#111111;transform:scaleX(0.9000)">2</div>
<div style="position:absolute;left:222px;top:540px;width:92px;height:19px;overflow:hidden;">
<div class="t" style="left:3px;top:3.15px;font-size:14px;color:#111111;transform:scaleX(0.9850)">Paradicsom</div>
</div>
<div class="t" style="left:319.00px;top:543.15px;font-size:14px;color:#111111;transform:scaleX(0.9850)">kg</div>
<div class="t" style="left:480.98px;top:543.15px;font-size:14px;color:#111111;transform:scaleX(0.9000)">239</div>
<div class="r" style="left:0px;top:560px;width:18px;height:19px;background:#dfe3e8;"></div>
<div class="r" style="left:18px;top:560px;width:15px;height:19px;background:#ffffff;"></div>
<div class="r" style="left:34px;top:560px;width:470px;height:19px;background:#ffffff;"></div>
<div class="r" style="left:504px;top:560px;width:94px;height:19px;background:#ffffff;"></div>
<div class="r" style="left:0px;top:579px;width:18px;height:1px;background:#a9aeb5;"></div>
<div class="r" style="left:18px;top:579px;width:581px;height:1px;background:#d5dbe7;"></div>
<div class="r" style="left:22px;top:565px;width:9px;height:9px;background:#fff;box-shadow:inset 0 0 0 1px #777;"></div>
<div class="r" style="left:24px;top:569px;width:5px;height:1px;background:#111;"></div>
<div class="r" style="left:26px;top:567px;width:1px;height:5px;background:#111;"></div>
<div class="t" style="left:111.99px;top:563.15px;font-size:14px;color:#111111;transform:scaleX(0.9000)">29</div>
<div class="t" style="left:212.99px;top:563.15px;font-size:14px;color:#111111;transform:scaleX(0.9000)">6</div>
<div style="position:absolute;left:222px;top:560px;width:92px;height:19px;overflow:hidden;">
<div class="t" style="left:3px;top:3.15px;font-size:14px;color:#111111;transform:scaleX(0.9850)">Ice Tea</div>
</div>
<div class="t" style="left:319.00px;top:563.15px;font-size:14px;color:#111111;transform:scaleX(0.9850)">doboz</div>
<div class="t" style="left:480.98px;top:563.15px;font-size:14px;color:#111111;transform:scaleX(0.9000)">229</div>
<div class="r" style="left:0px;top:580px;width:18px;height:19px;background:#dfe3e8;"></div>
<div class="r" style="left:18px;top:580px;width:15px;height:19px;background:#f2f2f2;"></div>
<div class="r" style="left:34px;top:580px;width:470px;height:19px;background:#f2f2f2;"></div>
<div class="r" style="left:504px;top:580px;width:94px;height:19px;background:#f2f2f2;"></div>
<div class="r" style="left:0px;top:599px;width:18px;height:1px;background:#a9aeb5;"></div>
<div class="r" style="left:18px;top:599px;width:581px;height:1px;background:#d5dbe7;"></div>
<div class="r" style="left:22px;top:585px;width:9px;height:9px;background:#fff;box-shadow:inset 0 0 0 1px #777;"></div>
<div class="r" style="left:24px;top:589px;width:5px;height:1px;background:#111;"></div>
<div class="r" style="left:26px;top:587px;width:1px;height:5px;background:#111;"></div>
<div class="t" style="left:111.99px;top:583.15px;font-size:14px;color:#111111;transform:scaleX(0.9000)">30</div>
<div class="t" style="left:212.99px;top:583.15px;font-size:14px;color:#111111;transform:scaleX(0.9000)">6</div>
<div style="position:absolute;left:222px;top:580px;width:92px;height:19px;overflow:hidden;">
<div class="t" style="left:3px;top:3.15px;font-size:14px;color:#111111;transform:scaleX(0.9850)">Ásványvíz</div>
</div>
<div class="t" style="left:319.00px;top:583.15px;font-size:14px;color:#111111;transform:scaleX(0.9850)">liter</div>
<div class="t" style="left:481.91px;top:583.15px;font-size:14px;color:#111111;transform:scaleX(0.9000)">119</div>
<div class="r" style="left:0px;top:600px;width:18px;height:19px;background:#dfe3e8;"></div>
<div class="r" style="left:18px;top:600px;width:15px;height:19px;background:#ffffff;"></div>
<div class="r" style="left:34px;top:600px;width:470px;height:19px;background:#ffffff;"></div>
<div class="r" style="left:504px;top:600px;width:94px;height:19px;background:#ffffff;"></div>
<div class="r" style="left:0px;top:619px;width:18px;height:1px;background:#a9aeb5;"></div>
<div class="r" style="left:18px;top:619px;width:581px;height:1px;background:#d5dbe7;"></div>
<div class="r" style="left:22px;top:605px;width:9px;height:9px;background:#fff;box-shadow:inset 0 0 0 1px #777;"></div>
<div class="r" style="left:24px;top:609px;width:5px;height:1px;background:#111;"></div>
<div class="r" style="left:26px;top:607px;width:1px;height:5px;background:#111;"></div>
<div class="t" style="left:111.99px;top:603.15px;font-size:14px;color:#111111;transform:scaleX(0.9000)">31</div>
<div class="t" style="left:212.99px;top:603.15px;font-size:14px;color:#111111;transform:scaleX(0.9000)">6</div>
<div style="position:absolute;left:222px;top:600px;width:92px;height:19px;overflow:hidden;">
<div class="t" style="left:3px;top:3.15px;font-size:14px;color:#111111;transform:scaleX(0.9850)">Almalé</div>
</div>
<div class="t" style="left:319.00px;top:603.15px;font-size:14px;color:#111111;transform:scaleX(0.9850)">liter</div>
<div class="t" style="left:480.98px;top:603.15px;font-size:14px;color:#111111;transform:scaleX(0.9000)">269</div>
<div class="r" style="left:0px;top:620px;width:18px;height:19px;background:#dfe3e8;"></div>
<div class="r" style="left:18px;top:620px;width:15px;height:19px;background:#f2f2f2;"></div>
<div class="r" style="left:34px;top:620px;width:470px;height:19px;background:#f2f2f2;"></div>
<div class="r" style="left:504px;top:620px;width:94px;height:19px;background:#f2f2f2;"></div>
<div class="r" style="left:0px;top:639px;width:18px;height:1px;background:#a9aeb5;"></div>
<div class="r" style="left:18px;top:639px;width:581px;height:1px;background:#d5dbe7;"></div>
<div class="r" style="left:22px;top:625px;width:9px;height:9px;background:#fff;box-shadow:inset 0 0 0 1px #777;"></div>
<div class="r" style="left:24px;top:629px;width:5px;height:1px;background:#111;"></div>
<div class="r" style="left:26px;top:627px;width:1px;height:5px;background:#111;"></div>
<div class="t" style="left:111.99px;top:623.15px;font-size:14px;color:#111111;transform:scaleX(0.9000)">32</div>
<div class="t" style="left:212.99px;top:623.15px;font-size:14px;color:#111111;transform:scaleX(0.9000)">6</div>
<div style="position:absolute;left:222px;top:620px;width:92px;height:19px;overflow:hidden;">
<div class="t" style="left:3px;top:3.15px;font-size:14px;color:#111111;transform:scaleX(0.9850)">Őszilé</div>
</div>
<div class="t" style="left:319.00px;top:623.15px;font-size:14px;color:#111111;transform:scaleX(0.9850)">liter</div>
<div class="t" style="left:480.98px;top:623.15px;font-size:14px;color:#111111;transform:scaleX(0.9000)">269</div>
<div class="r" style="left:0px;top:640px;width:18px;height:19px;background:#dfe3e8;"></div>
<div class="r" style="left:18px;top:640px;width:15px;height:19px;background:#ffffff;"></div>
<div class="r" style="left:34px;top:640px;width:470px;height:19px;background:#ffffff;"></div>
<div class="r" style="left:504px;top:640px;width:94px;height:19px;background:#ffffff;"></div>
<div class="r" style="left:0px;top:659px;width:18px;height:1px;background:#a9aeb5;"></div>
<div class="r" style="left:18px;top:659px;width:581px;height:1px;background:#d5dbe7;"></div>
<div class="r" style="left:22px;top:645px;width:9px;height:9px;background:#fff;box-shadow:inset 0 0 0 1px #777;"></div>
<div class="r" style="left:24px;top:649px;width:5px;height:1px;background:#111;"></div>
<div class="r" style="left:26px;top:647px;width:1px;height:5px;background:#111;"></div>
<div class="t" style="left:111.99px;top:643.15px;font-size:14px;color:#111111;transform:scaleX(0.9000)">33</div>
<div class="t" style="left:212.99px;top:643.15px;font-size:14px;color:#111111;transform:scaleX(0.9000)">6</div>
<div style="position:absolute;left:222px;top:640px;width:92px;height:19px;overflow:hidden;">
<div class="t" style="left:3px;top:3.15px;font-size:14px;color:#111111;transform:scaleX(0.9850)">Kajszilé</div>
</div>
<div class="t" style="left:319.00px;top:643.15px;font-size:14px;color:#111111;transform:scaleX(0.9850)">liter</div>
<div class="t" style="left:480.98px;top:643.15px;font-size:14px;color:#111111;transform:scaleX(0.9000)">269</div>
<div class="r" style="left:0px;top:660px;width:18px;height:19px;background:#dfe3e8;"></div>
<div class="r" style="left:18px;top:660px;width:15px;height:19px;background:#f2f2f2;"></div>
<div class="r" style="left:34px;top:660px;width:470px;height:19px;background:#f2f2f2;"></div>
<div class="r" style="left:504px;top:660px;width:94px;height:19px;background:#f2f2f2;"></div>
<div class="r" style="left:0px;top:679px;width:18px;height:1px;background:#a9aeb5;"></div>
<div class="r" style="left:18px;top:679px;width:581px;height:1px;background:#d5dbe7;"></div>
<div class="r" style="left:22px;top:665px;width:9px;height:9px;background:#fff;box-shadow:inset 0 0 0 1px #777;"></div>
<div class="r" style="left:24px;top:669px;width:5px;height:1px;background:#111;"></div>
<div class="r" style="left:26px;top:667px;width:1px;height:5px;background:#111;"></div>
<div class="t" style="left:111.99px;top:663.15px;font-size:14px;color:#111111;transform:scaleX(0.9000)">34</div>
<div class="t" style="left:212.99px;top:663.15px;font-size:14px;color:#111111;transform:scaleX(0.9000)">4</div>
<div style="position:absolute;left:222px;top:660px;width:92px;height:19px;overflow:hidden;">
<div class="t" style="left:3px;top:3.15px;font-size:14px;color:#111111;transform:scaleX(0.9850)">Piros mogyoró</div>
</div>
<div class="t" style="left:319.00px;top:663.15px;font-size:14px;color:#111111;transform:scaleX(0.9850)">darab</div>
<div class="t" style="left:480.98px;top:663.15px;font-size:14px;color:#111111;transform:scaleX(0.9000)">155</div>
<div class="r" style="left:0px;top:680px;width:18px;height:19px;background:#dfe3e8;"></div>
<div class="r" style="left:18px;top:680px;width:15px;height:19px;background:#ffffff;"></div>
<div class="r" style="left:34px;top:680px;width:470px;height:19px;background:#ffffff;"></div>
<div class="r" style="left:504px;top:680px;width:94px;height:19px;background:#ffffff;"></div>
<div class="r" style="left:0px;top:699px;width:18px;height:1px;background:#a9aeb5;"></div>
<div class="r" style="left:18px;top:699px;width:581px;height:1px;background:#d5dbe7;"></div>
<div class="r" style="left:22px;top:685px;width:9px;height:9px;background:#fff;box-shadow:inset 0 0 0 1px #777;"></div>
<div class="r" style="left:24px;top:689px;width:5px;height:1px;background:#111;"></div>
<div class="r" style="left:26px;top:687px;width:1px;height:5px;background:#111;"></div>
<div class="t" style="left:111.99px;top:683.15px;font-size:14px;color:#111111;transform:scaleX(0.9000)">35</div>
<div class="t" style="left:212.99px;top:683.15px;font-size:14px;color:#111111;transform:scaleX(0.9000)">4</div>
<div style="position:absolute;left:222px;top:680px;width:92px;height:19px;overflow:hidden;">
<div class="t" style="left:3px;top:3.15px;font-size:14px;color:#111111;transform:scaleX(0.9850)">Gabonapehely</div>
</div>
<div class="t" style="left:319.00px;top:683.15px;font-size:14px;color:#111111;transform:scaleX(0.9850)">darab</div>
<div class="t" style="left:487.99px;top:683.15px;font-size:14px;color:#111111;transform:scaleX(0.9000)">52</div>
<div class="r" style="left:0px;top:700px;width:18px;height:19px;background:#dfe3e8;"></div>
<div class="r" style="left:18px;top:700px;width:15px;height:19px;background:#f2f2f2;"></div>
<div class="r" style="left:34px;top:700px;width:470px;height:19px;background:#f2f2f2;"></div>
<div class="r" style="left:504px;top:700px;width:94px;height:19px;background:#f2f2f2;"></div>
<div class="r" style="left:0px;top:719px;width:18px;height:1px;background:#a9aeb5;"></div>
<div class="r" style="left:18px;top:719px;width:581px;height:1px;background:#d5dbe7;"></div>
<div class="r" style="left:22px;top:705px;width:9px;height:9px;background:#fff;box-shadow:inset 0 0 0 1px #777;"></div>
<div class="r" style="left:24px;top:709px;width:5px;height:1px;background:#111;"></div>
<div class="r" style="left:26px;top:707px;width:1px;height:5px;background:#111;"></div>
<div class="t" style="left:111.99px;top:703.15px;font-size:14px;color:#111111;transform:scaleX(0.9000)">36</div>
<div class="t" style="left:212.99px;top:703.15px;font-size:14px;color:#111111;transform:scaleX(0.9000)">4</div>
<div style="position:absolute;left:222px;top:700px;width:92px;height:19px;overflow:hidden;">
<div class="t" style="left:3px;top:3.15px;font-size:14px;color:#111111;transform:scaleX(0.9850)">Boci csoki</div>
</div>
<div class="t" style="left:319.00px;top:703.15px;font-size:14px;color:#111111;transform:scaleX(0.9850)">darab</div>
<div class="t" style="left:480.98px;top:703.15px;font-size:14px;color:#111111;transform:scaleX(0.9000)">142</div>
<div class="r" style="left:0px;top:720px;width:18px;height:19px;background:#dfe3e8;"></div>
<div class="r" style="left:18px;top:720px;width:15px;height:19px;background:#ffffff;"></div>
<div class="r" style="left:34px;top:720px;width:470px;height:19px;background:#ffffff;"></div>
<div class="r" style="left:504px;top:720px;width:94px;height:19px;background:#ffffff;"></div>
<div class="r" style="left:0px;top:739px;width:18px;height:1px;background:#a9aeb5;"></div>
<div class="r" style="left:18px;top:739px;width:581px;height:1px;background:#d5dbe7;"></div>
<div class="r" style="left:22px;top:725px;width:9px;height:9px;background:#fff;box-shadow:inset 0 0 0 1px #777;"></div>
<div class="r" style="left:24px;top:729px;width:5px;height:1px;background:#111;"></div>
<div class="r" style="left:26px;top:727px;width:1px;height:5px;background:#111;"></div>
<div class="t" style="left:111.99px;top:723.15px;font-size:14px;color:#111111;transform:scaleX(0.9000)">37</div>
<div class="t" style="left:212.99px;top:723.15px;font-size:14px;color:#111111;transform:scaleX(0.9000)">4</div>
<div style="position:absolute;left:222px;top:720px;width:92px;height:19px;overflow:hidden;">
<div class="t" style="left:3px;top:3.15px;font-size:14px;color:#111111;transform:scaleX(0.9850)">Konyakos meggy</div>
</div>
<div class="t" style="left:319.00px;top:723.15px;font-size:14px;color:#111111;transform:scaleX(0.9850)">darab</div>
<div class="t" style="left:480.98px;top:723.15px;font-size:14px;color:#111111;transform:scaleX(0.9000)">712</div>
<div class="r" style="left:0px;top:740px;width:18px;height:19px;background:#dfe3e8;"></div>
<div class="r" style="left:18px;top:740px;width:15px;height:19px;background:#f2f2f2;"></div>
<div class="r" style="left:34px;top:740px;width:470px;height:19px;background:#f2f2f2;"></div>
<div class="r" style="left:504px;top:740px;width:94px;height:19px;background:#f2f2f2;"></div>
<div class="r" style="left:0px;top:759px;width:18px;height:1px;background:#a9aeb5;"></div>
<div class="r" style="left:18px;top:759px;width:581px;height:1px;background:#d5dbe7;"></div>
<div class="r" style="left:22px;top:745px;width:9px;height:9px;background:#fff;box-shadow:inset 0 0 0 1px #777;"></div>
<div class="r" style="left:24px;top:749px;width:5px;height:1px;background:#111;"></div>
<div class="r" style="left:26px;top:747px;width:1px;height:5px;background:#111;"></div>
<div class="t" style="left:111.99px;top:743.15px;font-size:14px;color:#111111;transform:scaleX(0.9000)">38</div>
<div class="t" style="left:212.99px;top:743.15px;font-size:14px;color:#111111;transform:scaleX(0.9000)">4</div>
<div style="position:absolute;left:222px;top:740px;width:92px;height:19px;overflow:hidden;">
<div class="t" style="left:3px;top:3.15px;font-size:14px;color:#111111;transform:scaleX(0.9850)">Sportszelet</div>
</div>
<div class="t" style="left:319.00px;top:743.15px;font-size:14px;color:#111111;transform:scaleX(0.9850)">darab</div>
<div class="t" style="left:487.99px;top:743.15px;font-size:14px;color:#111111;transform:scaleX(0.9000)">82</div>
<div class="r" style="left:0px;top:760px;width:18px;height:19px;background:#dfe3e8;"></div>
<div class="r" style="left:18px;top:760px;width:15px;height:19px;background:#ffffff;"></div>
<div class="r" style="left:34px;top:760px;width:470px;height:19px;background:#ffffff;"></div>
<div class="r" style="left:504px;top:760px;width:94px;height:19px;background:#ffffff;"></div>
<div class="r" style="left:0px;top:779px;width:18px;height:1px;background:#a9aeb5;"></div>
<div class="r" style="left:18px;top:779px;width:581px;height:1px;background:#d5dbe7;"></div>
<div class="r" style="left:22px;top:765px;width:9px;height:9px;background:#fff;box-shadow:inset 0 0 0 1px #777;"></div>
<div class="r" style="left:24px;top:769px;width:5px;height:1px;background:#111;"></div>
<div class="r" style="left:26px;top:767px;width:1px;height:5px;background:#111;"></div>
<div class="t" style="left:111.99px;top:763.15px;font-size:14px;color:#111111;transform:scaleX(0.9000)">39</div>
<div class="t" style="left:212.99px;top:763.15px;font-size:14px;color:#111111;transform:scaleX(0.9000)">5</div>
<div style="position:absolute;left:222px;top:760px;width:92px;height:19px;overflow:hidden;">
<div class="t" style="left:3px;top:3.15px;font-size:14px;color:#111111;transform:scaleX(0.9850)">La Pasta 4 tojásos</div>
</div>
<div class="t" style="left:319.00px;top:763.15px;font-size:14px;color:#111111;transform:scaleX(0.9850)">kg</div>
<div class="t" style="left:480.98px;top:763.15px;font-size:14px;color:#111111;transform:scaleX(0.9000)">230</div>
<div class="r" style="left:0px;top:780px;width:18px;height:19px;background:#dfe3e8;"></div>
<div class="r" style="left:18px;top:780px;width:15px;height:19px;background:#f2f2f2;"></div>
<div class="r" style="left:34px;top:780px;width:470px;height:19px;background:#f2f2f2;"></div>
<div class="r" style="left:504px;top:780px;width:94px;height:19px;background:#f2f2f2;"></div>
<div class="r" style="left:0px;top:799px;width:18px;height:1px;background:#a9aeb5;"></div>
<div class="r" style="left:18px;top:799px;width:581px;height:1px;background:#d5dbe7;"></div>
<div class="r" style="left:22px;top:785px;width:9px;height:9px;background:#fff;box-shadow:inset 0 0 0 1px #777;"></div>
<div class="r" style="left:24px;top:789px;width:5px;height:1px;background:#111;"></div>
<div class="r" style="left:26px;top:787px;width:1px;height:5px;background:#111;"></div>
<div class="t" style="left:111.99px;top:783.15px;font-size:14px;color:#111111;transform:scaleX(0.9000)">40</div>
<div class="t" style="left:212.99px;top:783.15px;font-size:14px;color:#111111;transform:scaleX(0.9000)">5</div>
<div style="position:absolute;left:222px;top:780px;width:92px;height:19px;overflow:hidden;">
<div class="t" style="left:3px;top:3.15px;font-size:14px;color:#111111;transform:scaleX(0.9850)">Korona tészta</div>
</div>
<div class="t" style="left:319.00px;top:783.15px;font-size:14px;color:#111111;transform:scaleX(0.9850)">kg</div>
<div class="t" style="left:480.98px;top:783.15px;font-size:14px;color:#111111;transform:scaleX(0.9000)">399</div>
<div class="r" style="left:33px;top:0px;width:1px;height:790px;background:#d5dbe7;"></div>
<div class="r" style="left:127px;top:0px;width:1px;height:790px;background:#d5dbe7;"></div>
<div class="r" style="left:221px;top:0px;width:1px;height:790px;background:#d5dbe7;"></div>
<div class="r" style="left:315px;top:0px;width:1px;height:790px;background:#d5dbe7;"></div>
<div class="r" style="left:409px;top:0px;width:1px;height:790px;background:#d5dbe7;"></div>
<div class="r" style="left:503px;top:0px;width:1px;height:790px;background:#d5dbe7;"></div>
<div class="r" style="left:598px;top:0px;width:1px;height:790px;background:#d5dbe7;"></div>
<div class="r" style="left:18px;top:0px;width:1px;height:790px;background:#a9aeb5;"></div>
<div class="r" style="left:692px;top:0px;width:1px;height:790px;background:#eff1f6;"></div>
<div class="r" style="left:786px;top:0px;width:1px;height:790px;background:#eff1f6;"></div>
<div class="r" style="left:880px;top:0px;width:1px;height:790px;background:#eff1f6;"></div>
<div class="r" style="left:974px;top:0px;width:1px;height:790px;background:#eff1f6;"></div>
<div class="r" style="left:1068px;top:0px;width:1px;height:790px;background:#eff1f6;"></div>
<div class="r" style="left:1162px;top:0px;width:1px;height:790px;background:#eff1f6;"></div>
<div class="r" style="left:1256px;top:0px;width:1px;height:790px;background:#eff1f6;"></div>
<div class="r" style="left:1350px;top:0px;width:1px;height:790px;background:#eff1f6;"></div>
<div class="r" style="left:1444px;top:0px;width:1px;height:790px;background:#eff1f6;"></div>
<div class="r" style="left:1538px;top:0px;width:1px;height:790px;background:#eff1f6;"></div>
<div class="r" style="left:1632px;top:0px;width:1px;height:790px;background:#eff1f6;"></div>
</div>
<div class="r" style="left:907px;top:151px;width:1px;height:20px;background:#e4e6ee;"></div>
<div class="r" style="left:1001px;top:151px;width:1px;height:20px;background:#e4e6ee;"></div>
<div class="r" style="left:1095px;top:151px;width:1px;height:20px;background:#e4e6ee;"></div>
<div class="r" style="left:1189px;top:151px;width:1px;height:20px;background:#e4e6ee;"></div>
<div class="r" style="left:1283px;top:151px;width:1px;height:20px;background:#e4e6ee;"></div>
<div class="r" style="left:1377px;top:151px;width:1px;height:20px;background:#e4e6ee;"></div>
<div class="r" style="left:1471px;top:151px;width:1px;height:20px;background:#e4e6ee;"></div>
<div class="r" style="left:1565px;top:151px;width:1px;height:20px;background:#e4e6ee;"></div>
<div class="r" style="left:1659px;top:151px;width:1px;height:20px;background:#e4e6ee;"></div>
<div class="r" style="left:1753px;top:151px;width:1px;height:20px;background:#e4e6ee;"></div>
<div class="r" style="left:1847px;top:151px;width:1px;height:20px;background:#e4e6ee;"></div>
<div style="position:absolute;left:814px;top:171px;width:1089px;height:790px;overflow:hidden;">
<div class="r" style="left:0;top:19px;width:1090px;height:1px;background:#eff1f6"></div>
<div class="r" style="left:0;top:39px;width:1090px;height:1px;background:#eff1f6"></div>
<div class="r" style="left:0;top:59px;width:1090px;height:1px;background:#eff1f6"></div>
<div class="r" style="left:0;top:79px;width:1090px;height:1px;background:#eff1f6"></div>
<div class="r" style="left:0;top:99px;width:1090px;height:1px;background:#eff1f6"></div>
<div class="r" style="left:0;top:119px;width:1090px;height:1px;background:#eff1f6"></div>
<div class="r" style="left:0;top:139px;width:1090px;height:1px;background:#eff1f6"></div>
<div class="r" style="left:0;top:159px;width:1090px;height:1px;background:#eff1f6"></div>
<div class="r" style="left:0;top:179px;width:1090px;height:1px;background:#eff1f6"></div>
<div class="r" style="left:0;top:199px;width:1090px;height:1px;background:#eff1f6"></div>
<div class="r" style="left:0;top:219px;width:1090px;height:1px;background:#eff1f6"></div>
<div class="r" style="left:0;top:239px;width:1090px;height:1px;background:#eff1f6"></div>
<div class="r" style="left:0;top:259px;width:1090px;height:1px;background:#eff1f6"></div>
<div class="r" style="left:0;top:279px;width:1090px;height:1px;background:#eff1f6"></div>
<div class="r" style="left:0;top:299px;width:1090px;height:1px;background:#eff1f6"></div>
<div class="r" style="left:0;top:319px;width:1090px;height:1px;background:#eff1f6"></div>
<div class="r" style="left:0;top:339px;width:1090px;height:1px;background:#eff1f6"></div>
<div class="r" style="left:0;top:359px;width:1090px;height:1px;background:#eff1f6"></div>
<div class="r" style="left:0;top:379px;width:1090px;height:1px;background:#eff1f6"></div>
<div class="r" style="left:0;top:399px;width:1090px;height:1px;background:#eff1f6"></div>
<div class="r" style="left:0;top:419px;width:1090px;height:1px;background:#eff1f6"></div>
<div class="r" style="left:0;top:439px;width:1090px;height:1px;background:#eff1f6"></div>
<div class="r" style="left:0;top:459px;width:1090px;height:1px;background:#eff1f6"></div>
<div class="r" style="left:0;top:479px;width:1090px;height:1px;background:#eff1f6"></div>
<div class="r" style="left:0;top:499px;width:1090px;height:1px;background:#eff1f6"></div>
<div class="r" style="left:0;top:519px;width:1090px;height:1px;background:#eff1f6"></div>
<div class="r" style="left:0;top:539px;width:1090px;height:1px;background:#eff1f6"></div>
<div class="r" style="left:0;top:559px;width:1090px;height:1px;background:#eff1f6"></div>
<div class="r" style="left:0;top:579px;width:1090px;height:1px;background:#eff1f6"></div>
<div class="r" style="left:0;top:599px;width:1090px;height:1px;background:#eff1f6"></div>
<div class="r" style="left:0;top:619px;width:1090px;height:1px;background:#eff1f6"></div>
<div class="r" style="left:0;top:639px;width:1090px;height:1px;background:#eff1f6"></div>
<div class="r" style="left:0;top:659px;width:1090px;height:1px;background:#eff1f6"></div>
<div class="r" style="left:0;top:679px;width:1090px;height:1px;background:#eff1f6"></div>
<div class="r" style="left:0;top:699px;width:1090px;height:1px;background:#eff1f6"></div>
<div class="r" style="left:0;top:719px;width:1090px;height:1px;background:#eff1f6"></div>
<div class="r" style="left:0;top:739px;width:1090px;height:1px;background:#eff1f6"></div>
<div class="r" style="left:0;top:759px;width:1090px;height:1px;background:#eff1f6"></div>
<div class="r" style="left:0;top:779px;width:1090px;height:1px;background:#eff1f6"></div>
<div class="r" style="left:0;top:799px;width:1090px;height:1px;background:#eff1f6"></div>
</div>
<div class="r" style="left:717px;top:170px;width:97px;height:1px;background:#f0a0a8;"></div>
<div class="r" style="left:1903px;top:151px;width:16px;height:810px;background:#f0f0f0;"></div>
<div class="r" style="left:1904px;top:153px;width:14px;height:15px;background:#fff;box-shadow:inset 0 0 0 1px #a9a9a9;"></div>
<svg class="s" style="left:1907px;top:158px;" width="8" height="5" viewBox="0 0 8 5"><path d="M0 4.5L4 0.5L8 4.5Z" fill="#666"/></svg>
<div class="r" style="left:1904px;top:168px;width:14px;height:351px;background:#fff;box-shadow:inset 0 0 0 1px #a0a0a0;"></div>
<div class="r" style="left:1904px;top:944px;width:14px;height:15px;background:#fff;box-shadow:inset 0 0 0 1px #a9a9a9;"></div>
<svg class="s" style="left:1907px;top:950px;" width="8" height="5" viewBox="0 0 8 5"><path d="M0 0.5L4 4.5L8 0.5Z" fill="#666"/></svg>
<div class="r" style="left:215px;top:961px;width:1688px;height:19px;background:linear-gradient(#f4f5f7 0,#f4f5f7 50%,#e6e7eb 50%,#e6e7eb 100%);"></div>
<div class="r" style="left:215px;top:961px;width:1688px;height:1px;background:#a9aeb8;"></div>
<div class="r" style="left:1903px;top:961px;width:16px;height:19px;background:#c6c7ca;"></div>
<div class="r" style="left:215px;top:980px;width:1704px;height:1px;background:#c4c4c4;"></div>
<div class="r" style="left:1902px;top:961px;width:1px;height:19px;background:#a9aeb8;"></div>
<div class="t" style="left:220.00px;top:964.84px;font-size:12px;color:#555;transform:scaleX(0.9282);">Rekord:</div>
<svg class="s" style="left:267px;top:967px;" width="8" height="9" viewBox="0 0 8 9"><path d="M0.5 0V9" stroke="#333" stroke-width="1.2"/><path d="M7.5 0.5V8.5L2 4.5Z" fill="#333"/></svg>
<svg class="s" style="left:285px;top:967px;" width="5" height="9" viewBox="0 0 5 9"><path d="M4.5 0.5V8.5L0.5 4.5Z" fill="#b8b8b8"/></svg>
<div class="r" style="left:295px;top:963px;width:83px;height:16px;background:#fff;box-shadow:inset 0 0 0 1px #c8c8c8;"></div>
<div class="t" style="left:298.00px;top:964.84px;font-size:12px;color:#111;transform:scaleX(0.8920);">1, összesen 46</div>
<svg class="s" style="left:386px;top:967px;" width="5" height="9" viewBox="0 0 5 9"><path d="M0.5 0.5V8.5L4.5 4.5Z" fill="#333"/></svg>
<svg class="s" style="left:403px;top:967px;" width="8" height="9" viewBox="0 0 8 9"><path d="M0.5 0.5V8.5L5.5 4.5Z" fill="#333"/><path d="M7 0V9" stroke="#333" stroke-width="1.2"/></svg>
<svg class="s" style="left:417px;top:966px;" width="13" height="10" viewBox="0 0 13 10"><path d="M0.5 1.5V9.5L4.5 5.5Z" fill="#333"/><rect x="7" y="2" width="6" height="6" fill="#f5d030"/><path d="M10 0v10M6 5h7" stroke="#fff3a0" stroke-width="1"/></svg>
<div class="r" style="left:435px;top:962px;width:1px;height:18px;background:#c4c7cd;"></div>
<svg class="s" style="left:445px;top:967px;" width="9" height="9" viewBox="0 0 9 9"><path d="M0 0.5H7L4.5 3V6H3V3Z" fill="#b3b3b3"/><path d="M5 5.5l3.5 3.5M8.5 5.5L5 9" stroke="#c0c0c0" stroke-width="1"/></svg>
<div class="t" style="left:462.00px;top:964.84px;font-size:12px;color:#a0a0a0;transform:scaleX(0.9253);">Nincs szűrő</div>
<div class="r" style="left:530px;top:962px;width:1px;height:18px;background:#c4c7cd;"></div>
<div class="r" style="left:536px;top:963px;width:70px;height:16px;background:#fff;box-shadow:inset 0 0 0 1px #c8c8c8;"></div>
<div class="t" style="left:538.00px;top:964.84px;font-size:12px;color:#111;transform:scaleX(0.8405);">Keresés</div>
<div class="r" style="left:0px;top:981px;width:1919px;height:16px;background:#f3f3f3;"></div>
<div class="t" style="left:8.00px;top:984.84px;font-size:12px;color:#262626;transform:scaleX(0.9538);">Adatlap nézet</div>
<div class="t" style="left:1704.00px;top:984.84px;font-size:12px;color:#262626;transform:scaleX(0.9256);">Num Lock</div>
<div class="t" style="left:1770.00px;top:984.84px;font-size:12px;color:#262626;transform:scaleX(0.9031);">Scroll Lock</div>
<div class="r" style="left:1843px;top:981px;width:38px;height:16px;background:#c6c6c6;"></div>
<svg class="s" style="left:1855px;top:984px;" width="14" height="13" viewBox="0 0 14 13"><rect x="0.5" y="0.5" width="13" height="12.5" fill="#ddd" stroke="#666"/><path d="M0.5 3.5h13M4 0.5v12.5M6 6.5h2M9 6.5h2M6 9.5h2M9 9.5h2" stroke="#666" stroke-width="1"/></svg>
<svg class="s" style="left:1891px;top:984px;" width="14" height="13" viewBox="0 0 14 13"><path d="M0.5 1V10H5Z" fill="none" stroke="#666" stroke-width="1"/><path d="M5 8L12 1" stroke="#666" stroke-width="2"/><rect x="1" y="9.5" width="12" height="3.5" fill="#fff" stroke="#666"/></svg>
<div class="r" style="left:717px;top:170px;width:2px;height:21px;background:#f0a0a8;"></div>
<div class="r" style="left:721px;top:171px;width:171px;height:317px;background:#ffffff;box-shadow:0 0 0 1px #c6c6c6, 2px 2px 3px rgba(0,0,0,0.18);"></div>
<div class="t" style="left:754.00px;top:179.42px;font-size:12.5px;color:#444444;transform:scaleX(0.9196);">Rövid szöveg</div>
<div class="r" style="left:787px;top:191px;width:6px;height:1px;background:#555;"></div>
<div class="t" style="left:754.00px;top:203.42px;font-size:12.5px;color:#444444;transform:scaleX(0.9076);">Szám</div>
<div class="r" style="left:754px;top:215px;width:8px;height:1px;background:#555;"></div>
<div class="t" style="left:754.00px;top:227.42px;font-size:12.5px;color:#444444;transform:scaleX(0.9277);">Nagy szám</div>
<div class="r" style="left:754px;top:239px;width:8px;height:1px;background:#555;"></div>
<div class="t" style="left:754.00px;top:251.42px;font-size:12.5px;color:#444444;transform:scaleX(0.9062);">Pénzérték</div>
<div class="r" style="left:754px;top:263px;width:8px;height:1px;background:#555;"></div>
<div class="t" style="left:754.00px;top:275.42px;font-size:12.5px;color:#444444;transform:scaleX(0.9505);">Dátum és idő</div>
<div class="r" style="left:754px;top:287px;width:9px;height:1px;background:#555;"></div>
<div class="t" style="left:754.00px;top:299.42px;font-size:12.5px;color:#444444;">Igen/Nem</div>
<div class="r" style="left:754px;top:311px;width:3px;height:1px;background:#555;"></div>
<div class="t" style="left:754.00px;top:323.42px;font-size:12.5px;color:#444444;transform:scaleX(0.8922);">Keresés és kapcsolat</div>
<div class="r" style="left:831px;top:335px;width:6px;height:1px;background:#555;"></div>
<div class="t" style="left:754.00px;top:347.42px;font-size:12.5px;color:#444444;transform:scaleX(0.9379);">Rich Text</div>
<div class="r" style="left:793px;top:359px;width:6px;height:1px;background:#555;"></div>
<div class="t" style="left:754.00px;top:371.42px;font-size:12.5px;color:#444444;transform:scaleX(0.9085);">Hosszú szöveg</div>
<div class="r" style="left:754px;top:383px;width:8px;height:1px;background:#555;"></div>
<div class="t" style="left:754.00px;top:395.42px;font-size:12.5px;color:#444444;transform:scaleX(0.9732);">Melléklet</div>
<div class="r" style="left:754px;top:407px;width:10px;height:1px;background:#555;"></div>
<div class="t" style="left:754.00px;top:419.42px;font-size:12.5px;color:#444444;transform:scaleX(0.9324);">Hivatkozás</div>
<div class="r" style="left:765px;top:431px;width:6px;height:1px;background:#555;"></div>
<div class="t" style="left:754.00px;top:443.42px;font-size:12.5px;color:#444444;transform:scaleX(0.9443);">Számított mező</div>
<div class="r" style="left:754px;top:455px;width:8px;height:1px;background:#555;"></div>
<div class="t" style="left:754.00px;top:469.42px;font-size:12.5px;color:#444444;transform:scaleX(0.9219);">Beillesztés mezőkként</div>
<div class="r" style="left:812px;top:481px;width:10px;height:1px;background:#555;"></div>
<svg class="s" style="left:878px;top:444px;" width="5" height="9" viewBox="0 0 5 9"><path d="M0.5 0.5V8.5L4.5 4.5Z" fill="#555"/></svg>
<div class="r" style="left:754px;top:461px;width:137px;height:1px;background:#e0e0e0;"></div>
<div class="t" style="left:727.00px;top:179.53px;font-size:10px;color:#555;font-weight:bold;transform:scaleX(0.9000);">AB</div>
<div class="t" style="left:726.00px;top:203.00px;font-size:13px;color:#444;transform:scaleX(1.0374);">12</div>
<div class="t" style="left:726.00px;top:227.00px;font-size:13px;color:#444;transform:scaleX(1.0374);">12</div>
<svg class="s" style="left:725px;top:249px;" width="17" height="17" viewBox="0 0 17 17"><rect x="0.5" y="0.5" width="15" height="8" fill="#fff" stroke="#3f7fc3" stroke-width="1.3"/><circle cx="8" cy="4.5" r="2" fill="#3f7fc3"/><ellipse cx="11" cy="10" rx="4.5" ry="1.6" fill="#f5c88a"/><ellipse cx="11" cy="13" rx="4.5" ry="1.6" fill="#f5c88a"/><ellipse cx="7" cy="15.5" rx="4" ry="1.4" fill="#f5c88a"/></svg>
<svg class="s" style="left:725px;top:273px;" width="17" height="17" viewBox="0 0 17 17"><rect x="0.5" y="1" width="12" height="10" fill="#fff" stroke="#666" stroke-width="1"/><rect x="0.5" y="1" width="12" height="2" fill="#666"/><rect x="3" y="5" width="3" height="3" fill="none" stroke="#e97a2a" stroke-width="1"/><circle cx="12" cy="12" r="4.2" fill="#fff" stroke="#3f7fc3" stroke-width="1.2"/><path d="M12 9.5V12H14" fill="none" stroke="#3f7fc3" stroke-width="1"/></svg>
<svg class="s" style="left:726px;top:297px;" width="15" height="15" viewBox="0 0 15 15"><rect x="0.5" y="0.5" width="14" height="14" fill="#fff" stroke="#555" stroke-width="1"/><path d="M3 7.5l3 3 6-6.5" fill="none" stroke="#3f7fc3" stroke-width="2"/></svg>
<svg class="s" style="left:725px;top:321px;" width="17" height="17" viewBox="0 0 17 17"><path d="M1 3h4M1 6h3M1 9h3M1 12h3" stroke="#888" stroke-width="1"/><path d="M3 1l4 4-2 0z" fill="#e97a2a"/><circle cx="9" cy="9" r="4" fill="#fff" stroke="#555" stroke-width="1.4"/><path d="M12 12l3.5 3.5" stroke="#555" stroke-width="2"/></svg>
<div class="t" style="left:726.00px;top:346.00px;font-size:13px;color:#444;font-style:italic;transform:scaleX(0.9434);">Aa</div>
<div class="t" style="left:727.00px;top:371.54px;font-size:10px;color:#555;font-weight:bold;transform:scaleX(0.9000);">AB</div>
<svg class="s" style="left:729px;top:393px;" width="8" height="15" viewBox="0 0 8 15"><path d="M5.5 3.5V11a2 2 0 0 1-4 0V3a3 3 0 0 1 6 0V11" fill="none" stroke="#777" stroke-width="1"/></svg>
<svg class="s" style="left:725px;top:416px;" width="17" height="17" viewBox="0 0 17 17"><path d="M2 8a6 6 0 0 1 12 0" fill="none" stroke="#666" stroke-width="1"/><path d="M8 2v6M2.5 6h11M5 3a10 10 0 0 0 0 5M11 3a10 10 0 0 1 0 5" fill="none" stroke="#666" stroke-width="0.8"/><rect x="1" y="10" width="7" height="4.5" rx="2.2" fill="none" stroke="#3f7fc3" stroke-width="1.8"/><rect x="8" y="10" width="7" height="4.5" rx="2.2" fill="none" stroke="#3f7fc3" stroke-width="1.8"/></svg></body></html>
